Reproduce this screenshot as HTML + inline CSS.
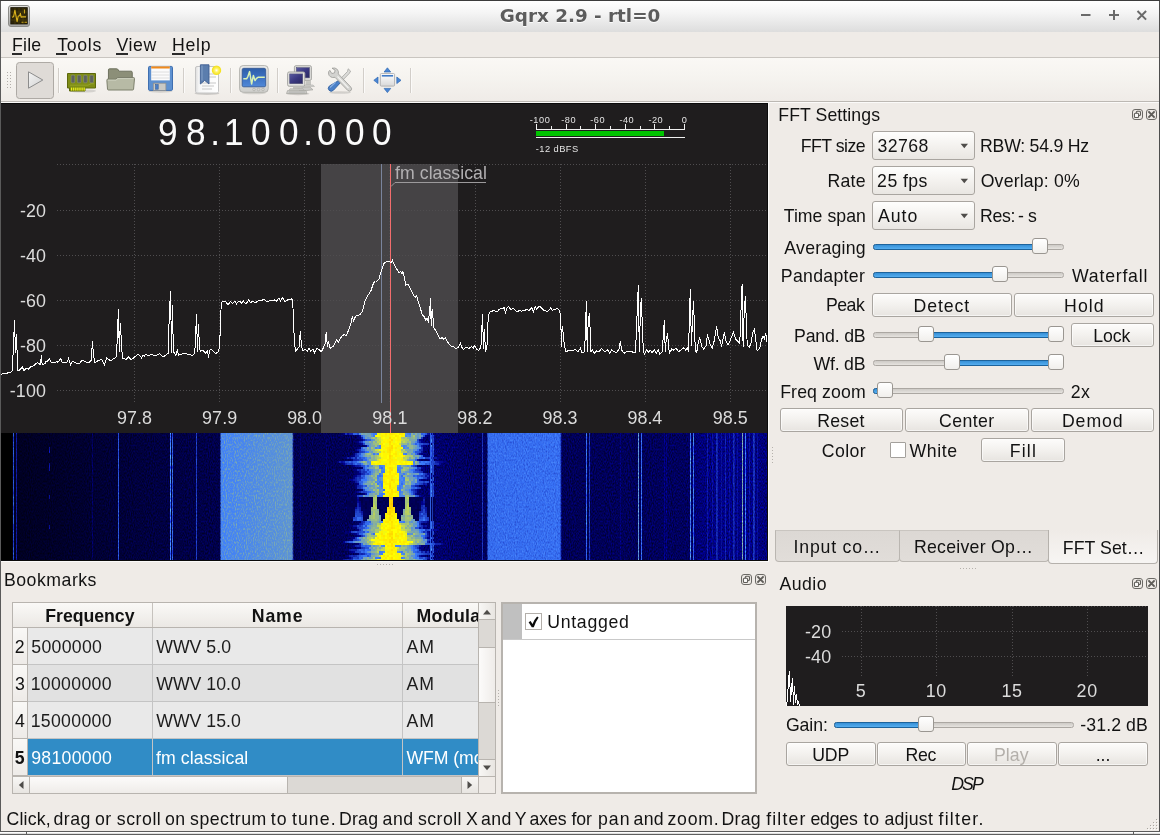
<!DOCTYPE html>
<html><head><meta charset="utf-8"><title>Gqrx 2.9 - rtl=0</title>
<style>
html,body{margin:0;padding:0;}
body{width:1160px;height:835px;position:relative;overflow:hidden;background:#efebe7;font-family:"Liberation Sans",sans-serif;}
div,span.t,svg{position:absolute;box-sizing:border-box;}
span.t{white-space:pre;line-height:20px;height:20px;}
#all{left:0;top:0;width:1160px;height:835px;will-change:transform;}
.btn{border:1px solid #a9a5a0;border-radius:3px;background:linear-gradient(#fdfcfb,#f3f1ee 50%,#e7e4e0);box-shadow:inset 0 0 0 1px rgba(255,255,255,.6);}
.cmb{border:1px solid #a9a5a0;border-radius:3px;background:linear-gradient(#fefefd,#f4f2ef 50%,#e9e6e2);}
.grv{border:1px solid #aba7a2;border-radius:2.5px;background:linear-gradient(#cdcac6,#e6e3df);}
.fil{border:1px solid #1d639c;border-radius:2.5px;background:linear-gradient(#3790d6,#55aef0);}
.thm{border:1px solid #9a9691;border-radius:3px;background:linear-gradient(#ffffff,#f1efec);}
.sep{width:1px;background:#d2cec9;border-right:1px solid #fbfaf9;box-sizing:content-box;}
</style></head><body><div id="all">

<div style="left:0px;top:0px;width:1160px;height:32px;background:linear-gradient(#ffffff,#f4f4f4 40%,#dddddd);border-top:1px solid #4a4a4a;"></div>
<div style="left:0px;top:32px;width:1160px;height:25px;background:#efebe7;"></div>
<div style="left:0px;top:57px;width:1160px;height:1px;background:#c9c5c0;"></div>
<div style="left:0px;top:58px;width:1160px;height:44px;background:linear-gradient(#faf8f5,#f6f4f0 40%,#efebe7);"></div>
<div style="left:0px;top:101px;width:1160px;height:1px;background:#bcb8b3;"></div>
<div style="left:0px;top:102px;width:1160px;height:1px;background:#fbfaf9;"></div>
<span class="t" style="left:380px;width:400px;text-align:center;top:6px;font-family:'DejaVu Sans',sans-serif;font-weight:bold;font-size:18.35px;color:#5c5c5c;text-shadow:0 1px 0 rgba(255,255,255,.8);">Gqrx 2.9 - rtl=0</span>
<svg style="left:1075px;top:4px" width="80" height="24" viewBox="0 0 80 24"><g stroke="#6a6a6a" stroke-width="2" fill="none"><path d="M6 11h9.500"/><path d="M34 11h10M39 6v10"/><path d="M62.500 7l8.600 8.600M71.100 7l-8.600 8.600"/></g></svg>
<svg style="left:7px;top:4px" width="24" height="24" viewBox="0 0 24 24"><defs><linearGradient id="ai" x1="0" y1="0" x2="0" y2="1"><stop offset="0" stop-color="#e2e2e0"/><stop offset="1" stop-color="#a4a4a2"/></linearGradient></defs><rect x="1.500" y="1.500" width="21" height="21" rx="2.500" fill="url(#ai)" stroke="#8b8b88"/><rect x="3.800" y="3.600" width="16.500" height="16.400" fill="#2c2408" stroke="#1a1404" stroke-width=".8"/><path d="M4 8h16M4 12h16M4 16h16M8 4v16M12 4v16M16 4v16" stroke="#55460f" stroke-width=".6"/><path d="M5 13.300l1.600-.6 1.300-6.500 2.200 11.500 1.100-5.500 1.500-.6.700-2.300.8 4 1.300-.4h3.500" stroke="#dcb41c" stroke-width="1.100" fill="none" stroke-linejoin="round"/><path d="M17.500 5.500v4M14.500 18.300h2M17.500 18.300h2.500" stroke="#c9a41a" stroke-width="1.100"/></svg>
<span class="t" style="left:12.08px;top:35px;font-size:17.7px;color:#121212;letter-spacing:0.209px;">File</span>
<div style="left:12px;top:53px;width:10px;height:2px;background:#2a2a2a"></div>
<span class="t" style="left:57.15px;top:35px;font-size:17.7px;color:#121212;letter-spacing:0.711px;">Tools</span>
<div style="left:56px;top:53px;width:11px;height:2px;background:#2a2a2a"></div>
<span class="t" style="left:116.60px;top:35px;font-size:17.7px;color:#121212;letter-spacing:0.548px;">View</span>
<div style="left:116px;top:53px;width:12px;height:2px;background:#2a2a2a"></div>
<span class="t" style="left:172.08px;top:35px;font-size:17.7px;color:#121212;letter-spacing:0.683px;">Help</span>
<div style="left:172px;top:53px;width:13px;height:2px;background:#2a2a2a"></div>
<svg style="left:6px;top:70px" width="6" height="20" viewBox="0 0 6 20" shape-rendering="crispEdges"><g fill="#b3afaa"><rect x="1" y="2" width="1" height="1"/><rect x="4" y="2" width="1" height="1"/><rect x="1" y="5" width="1" height="1"/><rect x="4" y="5" width="1" height="1"/><rect x="1" y="8" width="1" height="1"/><rect x="4" y="8" width="1" height="1"/><rect x="1" y="11" width="1" height="1"/><rect x="4" y="11" width="1" height="1"/><rect x="1" y="14" width="1" height="1"/><rect x="4" y="14" width="1" height="1"/><rect x="1" y="17" width="1" height="1"/><rect x="4" y="17" width="1" height="1"/></g></svg>
<div style="left:16px;top:62px;width:38px;height:37px;border:1px solid #aeaaa5;border-radius:3.5px;background:#dfdbd7;"></div>
<svg style="left:26px;top:69px" width="20" height="22" viewBox="0 0 20 22"><defs><linearGradient id="pg" x1="0" y1="0" x2="1" y2="1"><stop offset="0" stop-color="#f4f4f4"/><stop offset="1" stop-color="#d2d2d2"/></linearGradient></defs><path d="M2.5 2.8L16.8 11 2.5 19.2z" fill="url(#pg)" stroke="#8c8c8c" stroke-width="1"/></svg>
<div class="sep" style="left:58px;top:68px;width:1px;height:25px;"></div>
<div class="sep" style="left:183px;top:68px;width:1px;height:25px;"></div>
<div class="sep" style="left:230px;top:68px;width:1px;height:25px;"></div>
<div class="sep" style="left:277px;top:68px;width:1px;height:25px;"></div>
<div class="sep" style="left:363px;top:68px;width:1px;height:25px;"></div>
<div class="sep" style="left:410px;top:68px;width:1px;height:25px;"></div>
<svg style="left:66px;top:70px" width="32" height="24" viewBox="0 0 32 24">
<ellipse cx="17" cy="21" rx="13" ry="1.6" fill="#000" opacity=".12"/>
<path d="M1.5 3.5h28v14.5h-10.5v3h-15.5v-3h-2z" fill="#7f8d16" stroke="#5d680c"/>
<g fill="#5d625c" stroke="#8a8f88" stroke-width=".6"><rect x="5.2" y="5.2" width="3.6" height="7.6" rx="1"/><rect x="11.4" y="5.2" width="3.6" height="7.6" rx="1"/><rect x="17.6" y="5.2" width="3.6" height="7.6" rx="1"/><rect x="23.8" y="5.2" width="3.6" height="7.6" rx="1"/></g>
<path d="M4 15.2h18l3-1.5h3" stroke="#a3b030" stroke-width=".6" fill="none"/>
<g fill="#eef21e"><rect x="5" y="17.6" width="1.2" height="3"/><rect x="7.1" y="17.6" width="1.2" height="3"/><rect x="9.2" y="17.6" width="1.2" height="3"/><rect x="11.3" y="17.6" width="1.2" height="3"/><rect x="13.4" y="17.6" width="1.2" height="3"/><rect x="15.5" y="17.6" width="1.2" height="3"/><rect x="17.6" y="17.6" width="1.2" height="3"/></g></svg>
<svg style="left:106px;top:65px" width="30" height="28" viewBox="0 0 32 28" preserveAspectRatio="none">
<path d="M2.600 23V5q0-1.200 1.200-1.200h7.600q1 0 1.600 1l.8 1.400h13q1.200 0 1.200 1.200V23z" fill="#8c8f78" stroke="#6c6f5c"/>
<path d="M2.6 25q-.9 0-1-1L.9 15.3q-.1-1.2 1.1-1.2h8.600l1.500-1.600h17.200q1.200 0 1.100 1.200L29.400 24q-.1 1-1 1z" fill="#b7baa5" stroke="#7b7e6a"/>
<path d="M2 15.2h8.900l1.500-1.600h16.800" stroke="#d2d4c4" stroke-width=".8" fill="none"/></svg>
<svg style="left:146px;top:64px" width="30" height="30" viewBox="0 0 30 30">
<ellipse cx="14.5" cy="27.3" rx="12" ry="1.5" fill="#000" opacity=".13"/>
<path d="M2.500 3.600q0-1.200 1.200-1.200h21.600q1.200 0 1.200 1.200v21.600q0 1.200-1.200 1.200h-21.600q-1.200 0-1.200-1.200z" fill="#5e91d0" stroke="#3f6fb0"/>
<rect x="5.2" y="2.4" width="18.600" height="14" fill="#fbfbfb"/>
<rect x="5.2" y="2.400" width="18.600" height="2.100" fill="#f08a1c"/>
<path d="M5.200 8h18.600M5.200 11h18.600M5.200 14h18.600" stroke="#d8d8d8" stroke-width=".8"/>
<rect x="7.300" y="19.200" width="12.600" height="7.200" fill="#c9c9c5" stroke="#8f8f8b" stroke-width=".7"/>
<rect x="9.600" y="20.600" width="2.600" height="4.600" fill="#4a7fc6" stroke="#35609e" stroke-width=".6"/></svg>
<svg style="left:192px;top:62px" width="32" height="34" viewBox="0 0 32 34">
<defs><radialGradient id="sg"><stop offset="0" stop-color="#ffffff"/><stop offset=".35" stop-color="#fff36a"/><stop offset=".8" stop-color="#f5e220"/><stop offset="1" stop-color="#f5e220" stop-opacity="0"/></radialGradient>
<linearGradient id="dg" x1="0" x2="1"><stop offset="0" stop-color="#dcdcdc"/><stop offset=".15" stop-color="#f6f6f6"/><stop offset="1" stop-color="#ffffff"/></linearGradient></defs>
<ellipse cx="15" cy="31.500" rx="12.500" ry="1.400" fill="#000" opacity=".15"/>
<rect x="3.5" y="4.500" width="23" height="26.500" rx="1.500" fill="url(#dg)" stroke="#c4c4c4"/>
<path d="M16 12h8M16 15h8M10 21h14M10 24h12M10 27h10" stroke="#d9d9d9" stroke-width="1.6"/>
<path d="M8.400 2.800h8.600v19.200l-4.300-3.600-4.300 3.600z" fill="#5b7dad" stroke="#3f5f92" stroke-width=".9"/>
<path d="M10 3.500v15" stroke="#86a2c8" stroke-width="1"/>
<circle cx="24.500" cy="8.300" r="5.200" fill="url(#sg)"/></svg>
<svg style="left:238px;top:63px" width="33" height="32" viewBox="0 0 33 32">
<defs><linearGradient id="ms" x1="0" y1="0" x2="0" y2="1"><stop offset="0" stop-color="#2f5fa8"/><stop offset=".45" stop-color="#3a6fc0"/><stop offset="1" stop-color="#5189d8"/></linearGradient>
<linearGradient id="mf" x1="0" y1="0" x2="0" y2="1"><stop offset="0" stop-color="#ececea"/><stop offset="1" stop-color="#cfcfcc"/></linearGradient></defs>
<ellipse cx="16" cy="30" rx="12" ry="1.300" fill="#000" opacity=".12"/>
<rect x="1.600" y="2.600" width="28.600" height="26.700" rx="3.500" fill="url(#mf)" stroke="#b4b4b0"/>
<rect x="4.200" y="5.300" width="23.500" height="18.500" rx="1.500" fill="url(#ms)" stroke="#2d5391" stroke-width=".8"/>
<path d="M5.300 15.800h3.300l1.300-2.200 1.700-5 2 12.400 1.800-8.600 1.600 5.200 1.500-2.300 1.500-1h6.800" stroke="#d9f2b4" stroke-width="1.500" fill="none" stroke-linejoin="round"/>
<g fill="#d6d6d3" stroke="#a9a9a5" stroke-width=".6"><circle cx="16" cy="26.500" r="1.300"/><circle cx="20.500" cy="26.500" r="1.300"/><circle cx="25" cy="26.500" r="1.300"/></g></svg>
<svg style="left:284px;top:62.8px" width="34" height="33.200" viewBox="0 0 34 34" preserveAspectRatio="none">
<defs><linearGradient id="cs" x1="0" y1="0" x2="1" y2="1"><stop offset="0" stop-color="#5a5aa0"/><stop offset=".5" stop-color="#3a3880"/><stop offset="1" stop-color="#2a2860"/></linearGradient></defs>
<ellipse cx="14" cy="31.500" rx="11.500" ry="1.500" fill="#000" opacity=".15"/>
<path d="M14 25.500l12-1 3 3-13 1.500z" fill="#c9c9c6" stroke="#9c9c98" stroke-width=".6"/>
<rect x="10.400" y="2.800" width="17" height="15" rx="1.500" fill="#dededb" stroke="#a6a6a2"/>
<rect x="12.400" y="4.800" width="13" height="10.400" fill="url(#cs)" stroke="#55557a" stroke-width=".6"/>
<path d="M22 18.500h5v4h-5z" fill="#c4c4c0"/><path d="M20 22.500h9l1.500 1.500h-11z" fill="#d4d4d0" stroke="#a4a4a0" stroke-width=".5"/>
<rect x="3.600" y="9.200" width="17.200" height="14.600" rx="1.500" fill="#e2e2df" stroke="#a6a6a2"/>
<rect x="5.700" y="11.200" width="13" height="10" fill="url(#cs)" stroke="#55557a" stroke-width=".6"/>
<path d="M9 24h7v2.500h-7z" fill="#c0c0bc"/><path d="M6 26.300h13l1 1.400h-15z" fill="#d2d2ce" stroke="#a4a4a0" stroke-width=".5"/>
<path d="M3.500 28.300h18.500l1 3h-20.500z" fill="#cfcfcc" stroke="#9a9a96" stroke-width=".6"/>
<path d="M5 29.500h16M4.600 30.500h17" stroke="#a9a9a5" stroke-width=".5"/></svg>
<svg style="left:325px;top:65px" width="30" height="30" viewBox="0 0 30 30">
<ellipse cx="15" cy="27.500" rx="11" ry="1.300" fill="#000" opacity=".13"/>
<path d="M23.200 3.800l2.400 2.300-1.300 2.300-9 9.200-1.800-1.800 9-9.300z" fill="#dcdcd9" stroke="#a5a5a1" stroke-width=".8"/>
<path d="M13.400 15.700l2 2-6.800 7.400q-2.300 2.300-4.400.3t.2-4.400z" fill="#4a80c8" stroke="#2f5f9f" stroke-width=".9"/>
<path d="M5 22.500l5.500-5.300" stroke="#8ab0e0" stroke-width="1.200"/>
<path d="M3.600 6.600q-.6-2.600 1.200-3.800l2 3.200 2.700-.6.600-2.700-3.100-2q3.200-1 5.300 1.200 1.700 2 1 4.500l12.500 13.200q1.600 1.800.2 3.400-1.600 1.500-3.400-.2L10 9.800q-2.500.8-4.600-.6-1.400-1-1.800-2.600z" transform="translate(0,2.500)" fill="#d3d3d0" stroke="#9b9b97" stroke-width=".8"/>
<path d="M12.500 11.500l11 11.500" stroke="#f2f2f0" stroke-width="1.100"/></svg>
<svg style="left:372px;top:65px" width="31" height="30" viewBox="0 0 31 30">
<defs><linearGradient id="vw" x1="0" y1="0" x2="0" y2="1"><stop offset="0" stop-color="#ffffff"/><stop offset="1" stop-color="#d9d9d9"/></linearGradient></defs>
<rect x="8.300" y="8.600" width="14.300" height="12.500" rx="1" fill="url(#vw)" stroke="#b3b3b3"/>
<rect x="9.800" y="10" width="11.300" height="1.600" fill="#3f7ac6"/>
<g fill="#4a86d4" stroke="#2f68b2" stroke-width=".7"><path d="M15.400 2.800l3.300 4.200h-6.600z"/><path d="M15.400 27.600l3.300-4.200h-6.600z"/><path d="M1.800 15.300l4.200-3.300v6.600z"/><path d="M29 15.300l-4.200-3.300v6.600z"/></g></svg>
<div style="left:0px;top:103px;width:1px;height:458px;background:#8d8d8d;"></div>
<div style="left:1px;top:103px;width:767px;height:458px;background:#0b0b0b;"></div>
<div style="left:1px;top:104px;width:766px;height:329px;background:#1f1d1e;"></div>
<div style="left:768px;top:103px;width:1px;height:459px;background:#fbfaf9;"></div>
<div style="left:0px;top:561px;width:769px;height:1px;background:#fbfaf9;"></div>
<div style="left:154.3px;top:112px;width:260px;height:42px;line-height:42px;font-size:36.5px;color:#fbfbfb;white-space:nowrap;"><span style="display:inline-block;width:27.76px;text-align:center;transform:scaleX(.965);">9</span><span style="display:inline-block;width:27.76px;text-align:center;transform:scaleX(.965);">8</span><span style="display:inline-block;width:9.90px;text-align:center;transform:scaleX(.965);">.</span><span style="display:inline-block;width:27.76px;text-align:center;transform:scaleX(.965);">1</span><span style="display:inline-block;width:27.76px;text-align:center;transform:scaleX(.965);">0</span><span style="display:inline-block;width:27.76px;text-align:center;transform:scaleX(.965);">0</span><span style="display:inline-block;width:9.90px;text-align:center;transform:scaleX(.965);">.</span><span style="display:inline-block;width:27.76px;text-align:center;transform:scaleX(.965);">0</span><span style="display:inline-block;width:27.76px;text-align:center;transform:scaleX(.965);">0</span><span style="display:inline-block;width:27.76px;text-align:center;transform:scaleX(.965);">0</span></div>
<svg style="left:520px;top:108px" width="180" height="50" viewBox="0 0 180 50" shape-rendering="crispEdges"><rect x="16" y="21" width="149" height="1" fill="#f0f0f0"/><rect x="16.0" y="16" width="1" height="5" fill="#f0f0f0"/><rect x="31.0" y="18" width="1" height="3" fill="#f0f0f0"/><rect x="46.0" y="16" width="1" height="5" fill="#f0f0f0"/><rect x="60.0" y="18" width="1" height="3" fill="#f0f0f0"/><rect x="75.0" y="16" width="1" height="5" fill="#f0f0f0"/><rect x="90.0" y="18" width="1" height="3" fill="#f0f0f0"/><rect x="105.0" y="16" width="1" height="5" fill="#f0f0f0"/><rect x="120.0" y="18" width="1" height="3" fill="#f0f0f0"/><rect x="134.0" y="16" width="1" height="5" fill="#f0f0f0"/><rect x="149.0" y="18" width="1" height="3" fill="#f0f0f0"/><rect x="164.0" y="16" width="1" height="5" fill="#f0f0f0"/><rect x="16" y="23" width="128" height="5" fill="#00c400"/><rect x="16" y="29" width="149" height="1" fill="#f0f0f0"/></svg>
<span class="t" style="left:529.78px;top:110px;font-size:9.2px;color:#e4e4e4;letter-spacing:0.530px;">-100</span>
<span class="t" style="left:561.13px;top:110px;font-size:9.2px;color:#e4e4e4;letter-spacing:0.598px;">-80</span>
<span class="t" style="left:590.13px;top:110px;font-size:9.2px;color:#e4e4e4;letter-spacing:0.598px;">-60</span>
<span class="t" style="left:619.53px;top:110px;font-size:9.2px;color:#e4e4e4;letter-spacing:0.398px;">-40</span>
<span class="t" style="left:648.53px;top:110px;font-size:9.2px;color:#e4e4e4;letter-spacing:0.398px;">-20</span>
<span class="t" style="left:681.65px;top:110px;font-size:9.2px;color:#e4e4e4;">0</span>
<span class="t" style="left:535.83px;top:139px;font-size:9.3px;color:#e4e4e4;letter-spacing:0.428px;">-12 dBFS</span>
<svg style="left:1px;top:103px" width="767" height="330" viewBox="1 103 767 330"><rect x="321" y="164" width="137" height="269" fill="#454345"/><g stroke="#4f4d4f" stroke-width="1" stroke-dasharray="1 2" shape-rendering="crispEdges"><path d="M57 164.5H768"/><path d="M57 210.5H768"/><path d="M57 255.5H768"/><path d="M57 300.5H768"/><path d="M57 345.5H768"/><path d="M57 390.5H768"/><path d="M134.5 164V403"/><path d="M219.5 164V403"/><path d="M304.5 164V403"/><path d="M389.5 164V403"/><path d="M475.5 164V403"/><path d="M560.5 164V403"/><path d="M645.5 164V403"/><path d="M730.5 164V403"/></g><rect x="381" y="164" width="1" height="239" fill="#7a849c" shape-rendering="crispEdges"/><rect x="390" y="164" width="1" height="269" fill="#f26d6d" shape-rendering="crispEdges"/><path d="M391 186.500L395 182.500H486" stroke="#9c9a9c" stroke-width="1" fill="none"/><polyline fill="none" stroke="#ffffff" stroke-width="1" shape-rendering="crispEdges" points="1.4,374.5 3.3,373.3 5.2,373.3 6.9,373.2 8.6,372.6 10.3,372.8 12.1,370.7 13.1,353.4 14.5,319.8 15.5,353.4 16.2,333.6 17.2,353.4 17.9,370.7 19.3,370.1 20.7,369.0 22.4,367.2 24.1,370.7 25.9,368.1 28.4,369.0 31.0,366.4 32.8,366.1 34.5,365.2 36.2,363.1 37.9,362.9 40.5,364.7 41.4,355.2 42.2,364.7 44.8,363.8 46.3,361.0 47.7,361.1 49.1,358.6 51.7,362.9 53.4,362.4 55.2,362.9 56.6,361.5 58.0,362.3 59.5,360.3 60.7,358.3 62.1,362.4 63.8,362.2 65.5,362.9 67.2,362.1 68.6,358.6 70.7,364.7 72.4,361.2 74.1,362.0 75.9,362.9 77.6,363.7 79.3,363.8 81.9,360.3 83.3,360.2 84.8,361.8 86.2,362.1 88.8,362.9 91.4,360.3 92.4,341.0 93.4,353.4 94.5,362.1 96.4,362.0 98.3,360.3 100.0,360.0 101.7,359.5 104.3,364.7 106.9,357.8 108.6,359.6 110.3,360.3 112.1,359.9 113.8,358.6 116.4,356.9 117.6,331.0 118.4,309.0 119.3,351.7 120.3,323.3 121.4,341.4 122.4,358.6 124.1,358.1 125.9,359.5 128.4,356.9 131.0,359.5 132.8,358.8 134.5,356.9 136.2,355.8 137.9,354.3 139.7,355.6 141.4,357.8 142.8,355.6 144.3,356.3 145.7,354.3 148.3,356.0 150.0,355.1 151.7,354.3 153.4,355.2 155.2,355.2 156.6,355.4 158.0,354.5 159.5,353.4 162.1,356.0 163.8,356.5 165.5,355.2 168.1,353.4 169.3,315.5 170.5,291.0 171.6,353.4 172.4,305.2 173.4,351.7 175.9,355.2 177.2,350.0 178.6,355.2 180.0,354.4 181.4,354.7 182.8,353.4 184.5,353.3 186.2,353.4 187.9,354.8 189.7,354.3 191.6,355.4 193.4,354.8 194.8,352.6 195.7,332.8 196.6,314.1 197.4,351.7 198.4,324.1 199.5,346.6 200.3,351.7 202.9,350.0 205.5,353.4 207.2,350.9 208.6,356.0 210.3,349.1 211.8,349.5 213.3,351.7 215.9,353.4 218.4,351.7 219.7,346.6 220.5,319.0 221.4,302.6 223.0,301.6 224.6,301.6 226.2,302.1 227.9,304.8 230.5,301.7 232.2,303.4 234.8,301.4 236.6,303.8 239.1,300.9 241.7,303.1 243.4,300.9 246.0,304.3 248.6,300.0 250.3,302.6 252.9,301.4 254.7,302.7 256.4,302.1 259.0,300.0 261.0,301.0 262.6,299.9 264.1,299.1 266.7,301.4 268.2,301.5 269.6,300.6 271.0,300.9 272.8,300.4 274.5,300.0 276.2,301.4 278.8,298.3 280.5,300.9 282.6,297.4 284.8,301.7 287.4,300.0 289.1,299.7 291.7,298.6 292.8,301.7 293.4,320.7 294.5,343.1 295.5,351.4 297.8,348.3 299.1,346.6 300.3,331.0 301.6,346.6 302.9,350.9 305.2,349.1 307.2,351.4 309.0,348.3 310.7,350.9 312.8,349.1 314.5,352.6 316.7,348.6 319.3,349.7 321.4,351.7 323.6,347.4 325.0,344.0 326.2,332.4 327.4,346.6 328.4,341.4 330.0,348.3 331.6,347.2 333.1,346.6 336.6,339.7 338.3,342.2 341.7,336.2 344.3,334.5 346.0,336.2 348.6,330.2 351.2,322.4 352.4,316.4 353.4,320.7 355.5,316.4 357.0,315.5 358.4,315.4 359.8,314.7 362.4,311.2 365.0,300.9 367.6,295.7 369.3,293.3 371.0,290.5 373.6,282.8 375.3,281.0 377.1,281.1 378.8,279.3 381.4,270.7 384.0,263.4 386.6,261.4 386.9,261.2 389.5,261.4 391.2,262.9 392.4,260.3 394.7,265.5 397.2,269.8 399.0,272.4 400.7,271.6 402.1,274.1 402.9,271.6 404.1,275.9 405.9,285.3 407.6,284.1 409.3,286.2 411.0,289.7 413.6,295.7 415.3,297.4 416.6,295.7 418.3,301.7 420.5,308.6 422.2,314.7 424.0,316.4 425.7,319.8 426.9,318.1 428.3,321.6 429.7,311.2 430.5,298.3 431.2,325.9 432.1,309.5 433.1,319.0 433.8,327.6 436.0,331.0 438.6,336.2 440.0,338.8 442.1,337.6 443.8,339.3 445.2,337.6 447.2,341.4 449.8,344.8 451.6,346.6 454.1,346.9 455.9,348.6 458.4,347.4 460.5,343.4 461.9,347.4 463.6,349.7 466.2,346.9 468.8,348.6 471.4,346.6 473.1,348.3 474.5,345.7 476.6,349.1 478.6,350.3 480.9,347.4 481.7,331.0 482.6,314.1 483.4,349.1 484.3,329.3 485.5,350.9 486.9,348.3 487.6,331.0 488.3,315.5 490.3,311.2 492.1,311.2 493.8,310.3 495.9,311.7 497.4,311.5 499.0,309.5 501.6,308.6 504.1,307.8 505.5,312.1 506.7,308.6 508.4,306.6 511.0,309.5 513.6,308.6 516.2,311.2 517.9,311.4 519.7,310.0 521.4,311.3 523.1,310.3 524.8,310.3 526.6,309.5 529.1,310.3 531.7,307.8 533.4,312.1 535.2,306.9 536.9,309.5 538.6,306.6 540.3,306.8 542.1,308.6 543.8,310.4 545.5,310.7 547.2,311.4 549.0,310.0 550.7,307.8 552.4,310.3 555.0,309.5 557.6,308.6 559.3,310.3 560.7,315.5 561.4,346.6 562.2,325.9 563.1,332.8 564.5,346.6 565.9,351.4 567.9,350.9 570.0,350.0 572.6,350.9 575.2,349.1 577.8,351.7 580.3,348.3 582.1,353.1 584.7,351.7 585.5,325.9 586.4,301.0 587.2,351.7 588.1,324.1 589.3,313.1 590.3,332.8 591.0,351.7 592.4,350.0 594.1,353.4 596.7,350.9 599.3,351.7 601.4,348.3 603.6,350.9 605.3,351.7 607.6,349.7 609.7,353.4 611.4,350.0 614.0,351.7 616.6,352.6 619.1,349.1 620.3,341.0 621.7,350.0 624.3,353.4 626.9,350.9 629.5,351.7 632.1,351.7 633.8,353.0 635.5,352.6 636.9,319.0 638.3,285.0 639.3,351.7 640.2,319.0 641.2,298.3 642.4,325.9 643.3,351.7 644.5,354.3 646.7,350.0 648.4,352.1 650.2,350.0 651.9,352.6 654.5,350.0 656.2,353.1 658.3,349.7 659.7,354.3 662.2,351.7 663.3,336.2 664.3,320.3 665.3,351.7 666.2,339.7 667.6,333.1 668.6,346.6 669.5,353.4 671.7,349.1 673.4,350.0 676.0,348.3 678.6,351.7 681.2,349.7 683.8,347.9 685.9,350.3 687.2,347.4 688.6,351.7 689.3,319.0 690.3,289.3 691.4,345.7 692.4,324.1 693.4,301.0 694.5,325.9 695.3,351.7 696.7,352.6 698.4,341.4 699.7,338.3 701.9,346.6 703.6,349.1 706.2,345.7 707.4,334.5 708.8,339.7 710.0,344.0 712.2,348.3 714.5,339.7 716.6,326.2 718.3,337.9 720.0,340.5 721.7,345.7 724.3,332.4 726.0,341.4 727.8,344.8 729.5,342.2 731.2,337.9 733.4,332.4 735.5,338.8 737.6,341.4 739.8,343.1 741.0,310.3 742.1,284.1 743.1,346.6 744.1,315.5 745.3,296.2 746.4,322.4 747.2,344.8 749.3,347.4 751.0,343.1 752.8,332.8 754.5,329.3 755.9,341.4 757.1,350.9 759.7,348.3 761.4,339.7 763.1,336.2 764.5,338.8 765.7,332.8 766.9,342.2"/></svg>
<span class="t" style="left:395.12px;top:163px;font-size:17.7px;color:#b2b0b2;letter-spacing:0.029px;">fm classical</span>
<span class="t" style="left:19.88px;top:201px;font-size:17.9px;color:#dcdcdc;letter-spacing:0.139px;">-20</span>
<span class="t" style="left:19.88px;top:246px;font-size:17.9px;color:#dcdcdc;letter-spacing:0.139px;">-40</span>
<span class="t" style="left:19.88px;top:291px;font-size:17.9px;color:#dcdcdc;letter-spacing:0.139px;">-60</span>
<span class="t" style="left:19.88px;top:336px;font-size:17.9px;color:#dcdcdc;letter-spacing:0.139px;">-80</span>
<span class="t" style="left:9.68px;top:381px;font-size:17.9px;color:#dcdcdc;letter-spacing:0.181px;">-100</span>
<span class="t" style="left:116.94px;top:408px;font-size:17.9px;color:#dcdcdc;letter-spacing:0.069px;">97.8</span>
<span class="t" style="left:202.04px;top:408px;font-size:17.9px;color:#dcdcdc;letter-spacing:0.099px;">97.9</span>
<span class="t" style="left:287.14px;top:408px;font-size:17.9px;color:#dcdcdc;letter-spacing:0.039px;">98.0</span>
<span class="t" style="left:372.24px;top:408px;font-size:17.9px;color:#dcdcdc;letter-spacing:0.099px;">98.1</span>
<span class="t" style="left:457.34px;top:408px;font-size:17.9px;color:#dcdcdc;letter-spacing:0.099px;">98.2</span>
<span class="t" style="left:542.44px;top:408px;font-size:17.9px;color:#dcdcdc;letter-spacing:0.069px;">98.3</span>
<span class="t" style="left:627.54px;top:408px;font-size:17.9px;color:#dcdcdc;letter-spacing:-0.021px;">98.4</span>
<span class="t" style="left:712.64px;top:408px;font-size:17.9px;color:#dcdcdc;letter-spacing:0.069px;">98.5</span>
<svg width="766" height="127" viewBox="0 0 766 127" style="left:1px;top:433px;isolation:isolate" shape-rendering="crispEdges"><defs><filter id="nz" x="0" y="0" width="100%" height="100%" color-interpolation-filters="sRGB"><feTurbulence type="fractalNoise" baseFrequency="0.95 0.5" numOctaves="1" seed="5"/><feColorMatrix type="matrix" values="0.9 0 0 0 0.04  0.9 0 0 0 0.04  0.9 0 0 0 0.04  0 0 0 0 1"/></filter><filter id="nc" x="0" y="0" width="100%" height="100%" color-interpolation-filters="sRGB"><feTurbulence type="fractalNoise" baseFrequency="0.9 0.45" numOctaves="1" seed="21"/><feColorMatrix type="matrix" values="0 0 0 0 0.14  0 0 0 0 0.28  0 0 0 0 0.8  2.4 0 0 0 -1.05"/></filter><filter id="nd" x="0" y="0" width="100%" height="100%" color-interpolation-filters="sRGB"><feTurbulence type="fractalNoise" baseFrequency="0.9 0.45" numOctaves="1" seed="33"/><feColorMatrix type="matrix" values="0 0 0 0 0.3  0 0 0 0 0.55  0 0 0 0 1  2.4 0 0 0 -1.1"/></filter><filter id="nb" x="0" y="0" width="100%" height="100%" color-interpolation-filters="sRGB"><feTurbulence type="fractalNoise" baseFrequency="0.9 0.45" numOctaves="1" seed="9"/><feColorMatrix type="matrix" values="0 0 0 0 0.56  0 0 0 0 0.72  0 0 0 0 0.6  2.2 0 0 0 -1.0"/></filter><linearGradient id="wb"><stop offset="0.00000" stop-color="#000000"/><stop offset="0.01436" stop-color="#000000"/><stop offset="0.01567" stop-color="#000022"/><stop offset="0.07702" stop-color="#00002a"/><stop offset="0.12924" stop-color="#000035"/><stop offset="0.19452" stop-color="#000040"/><stop offset="0.25979" stop-color="#000049"/><stop offset="0.28590" stop-color="#00004c"/><stop offset="0.28721" stop-color="#4080fa"/><stop offset="0.37990" stop-color="#5b92d6"/><stop offset="0.38120" stop-color="#142ab2"/><stop offset="0.38251" stop-color="#000051"/><stop offset="0.44256" stop-color="#000057"/><stop offset="0.56397" stop-color="#000070"/><stop offset="0.63446" stop-color="#00005c"/><stop offset="0.63577" stop-color="#346cf0"/><stop offset="0.72977" stop-color="#3670f4"/><stop offset="0.73107" stop-color="#0a159f"/><stop offset="0.73238" stop-color="#000057"/><stop offset="0.83420" stop-color="#00005a"/><stop offset="0.89687" stop-color="#00005f"/><stop offset="0.90731" stop-color="#000076"/><stop offset="0.93864" stop-color="#000086"/><stop offset="0.97781" stop-color="#000086"/><stop offset="1.00000" stop-color="#00007b"/></linearGradient></defs><rect x="0" y="0" width="766" height="127" fill="url(#wb)"/><rect x="12" y="0" width="1" height="127" fill="#244bd1"/><rect x="15" y="0" width="1" height="127" fill="#0c19a3"/><rect x="91" y="0" width="1" height="127" fill="#000062"/><rect x="117" y="0" width="1" height="127" fill="#2853d9"/><rect x="169" y="0" width="1" height="127" fill="#4080fa"/><rect x="171" y="0" width="1" height="127" fill="#2c5ce0"/><rect x="195" y="0" width="1" height="127" fill="#1e3ec6"/><rect x="299" y="0" width="1" height="127" fill="#000070"/><rect x="325" y="0" width="1" height="127" fill="#000070"/><rect x="430" y="0" width="1" height="127" fill="#346cf0"/><rect x="432" y="0" width="1" height="127" fill="#244bd1"/><rect x="481" y="0" width="1" height="127" fill="#1832ba"/><rect x="585" y="0" width="1" height="127" fill="#346cf0"/><rect x="588" y="0" width="1" height="127" fill="#1c3ac2"/><rect x="619" y="0" width="1" height="127" fill="#00007b"/><rect x="637" y="0" width="1" height="127" fill="#5b92d6"/><rect x="640" y="0" width="1" height="127" fill="#346cf0"/><rect x="663" y="0" width="1" height="127" fill="#00008c"/><rect x="665" y="0" width="1" height="127" fill="#000081"/><rect x="689" y="0" width="1" height="127" fill="#4c87eb"/><rect x="692" y="0" width="1" height="127" fill="#346cf0"/><rect x="741" y="0" width="1" height="127" fill="#7aa7ad"/><rect x="744" y="0" width="1" height="127" fill="#3875f7"/><rect x="706" y="0" width="1" height="127" fill="#0c19a3"/><rect x="711" y="0" width="1" height="127" fill="#08119b"/><rect x="715" y="0" width="1" height="127" fill="#142ab2"/><rect x="716" y="0" width="1" height="127" fill="#1021ab"/><rect x="720" y="0" width="1" height="127" fill="#08119b"/><rect x="724" y="0" width="1" height="127" fill="#1021ab"/><rect x="728" y="0" width="1" height="127" fill="#08119b"/><rect x="732" y="0" width="1" height="127" fill="#142ab2"/><rect x="733" y="0" width="1" height="127" fill="#0c19a3"/><rect x="736" y="0" width="1" height="127" fill="#08119b"/><rect x="748" y="0" width="1" height="127" fill="#0c19a3"/><rect x="752" y="0" width="1" height="127" fill="#1832ba"/><rect x="753" y="0" width="1" height="127" fill="#142ab2"/><rect x="756" y="0" width="1" height="127" fill="#08119b"/><rect x="48" y="14" width="1" height="6" fill="#0a12a0"/><rect x="48" y="30" width="1" height="8" fill="#0a12a0"/><rect x="48" y="62" width="1" height="4" fill="#0a12a0"/><rect x="48" y="92" width="1" height="4" fill="#0a12a0"/><rect x="220" y="0" width="72" height="127" filter="url(#nb)"/><rect x="487" y="0" width="73" height="127" filter="url(#nc)"/><rect x="487" y="0" width="73" height="127" filter="url(#nd)"/><rect x="0" y="0" width="220" height="127" filter="url(#nz)" style="mix-blend-mode:overlay"/><rect x="292" y="0" width="195" height="127" filter="url(#nz)" style="mix-blend-mode:overlay"/><rect x="560" y="0" width="206" height="127" filter="url(#nz)" style="mix-blend-mode:overlay"/><path fill="#000046" d="M351.5 16h2v2h-2zM399.5 64h2v2h-2zM359.5 66h2v2h-2zM381.5 66h2v2h-2zM399.5 66h2v2h-2zM359.5 68h2v2h-2zM377.5 68h2v2h-2zM429.5 68h2v2h-2zM363.5 70h2v2h-2zM395.5 70h2v2h-2zM363.5 74h2v2h-2zM377.5 76h2v2h-2zM415.5 76h2v2h-2zM363.5 84h2v2h-2zM349.5 86h2v2h-2z"/><path fill="#00004e" d="M349.5 20h2v2h-2zM349.5 64h2v2h-2zM357.5 64h2v2h-2zM359.5 64h2v2h-2zM365.5 64h2v2h-2zM367.5 64h2v2h-2zM369.5 64h2v2h-2zM375.5 64h2v2h-2zM377.5 64h2v2h-2zM379.5 64h2v2h-2zM381.5 64h2v2h-2zM385.5 64h2v2h-2zM393.5 64h2v2h-2zM401.5 64h2v2h-2zM407.5 64h2v2h-2zM411.5 64h2v2h-2zM415.5 64h2v2h-2zM417.5 64h2v2h-2zM427.5 64h2v2h-2zM349.5 66h2v2h-2zM351.5 66h2v2h-2zM357.5 66h2v2h-2zM367.5 66h2v2h-2zM375.5 66h2v2h-2zM385.5 66h2v2h-2zM395.5 66h2v2h-2zM397.5 66h2v2h-2zM407.5 66h2v2h-2zM413.5 66h2v2h-2zM415.5 66h2v2h-2zM423.5 66h2v2h-2zM431.5 66h2v2h-2zM345.5 68h2v2h-2zM347.5 68h2v2h-2zM351.5 68h2v2h-2zM363.5 68h2v2h-2zM367.5 68h2v2h-2zM369.5 68h2v2h-2zM375.5 68h2v2h-2zM379.5 68h2v2h-2zM383.5 68h2v2h-2zM385.5 68h2v2h-2zM393.5 68h2v2h-2zM399.5 68h2v2h-2zM413.5 68h2v2h-2zM427.5 68h2v2h-2zM431.5 68h2v2h-2zM345.5 70h2v2h-2zM347.5 70h2v2h-2zM349.5 70h2v2h-2zM353.5 70h2v2h-2zM359.5 70h2v2h-2zM383.5 70h2v2h-2zM391.5 70h2v2h-2zM399.5 70h2v2h-2zM401.5 70h2v2h-2zM409.5 70h2v2h-2zM413.5 70h2v2h-2zM415.5 70h2v2h-2zM423.5 70h2v2h-2zM427.5 70h2v2h-2zM347.5 72h2v2h-2zM349.5 72h2v2h-2zM351.5 72h2v2h-2zM353.5 72h2v2h-2zM361.5 72h2v2h-2zM363.5 72h2v2h-2zM369.5 72h2v2h-2zM377.5 72h2v2h-2zM381.5 72h2v2h-2zM385.5 72h2v2h-2zM391.5 72h2v2h-2zM393.5 72h2v2h-2zM399.5 72h2v2h-2zM401.5 72h2v2h-2zM407.5 72h2v2h-2zM411.5 72h2v2h-2zM415.5 72h2v2h-2zM429.5 72h2v2h-2zM351.5 74h2v2h-2zM375.5 74h2v2h-2zM383.5 74h2v2h-2zM393.5 74h2v2h-2zM399.5 74h2v2h-2zM415.5 74h2v2h-2zM431.5 74h2v2h-2zM345.5 76h2v2h-2zM349.5 76h2v2h-2zM379.5 76h2v2h-2zM397.5 76h2v2h-2zM409.5 76h2v2h-2zM413.5 76h2v2h-2zM417.5 76h2v2h-2zM429.5 76h2v2h-2zM431.5 76h2v2h-2zM349.5 78h2v2h-2zM351.5 78h2v2h-2zM367.5 78h2v2h-2zM377.5 78h2v2h-2zM381.5 78h2v2h-2zM393.5 78h2v2h-2zM397.5 78h2v2h-2zM411.5 78h2v2h-2zM429.5 78h2v2h-2zM347.5 80h2v2h-2zM349.5 80h2v2h-2zM351.5 80h2v2h-2zM377.5 80h2v2h-2zM395.5 80h2v2h-2zM399.5 80h2v2h-2zM411.5 80h2v2h-2zM425.5 80h2v2h-2zM429.5 80h2v2h-2zM345.5 82h2v2h-2zM347.5 82h2v2h-2zM349.5 82h2v2h-2zM351.5 82h2v2h-2zM365.5 82h2v2h-2zM397.5 82h2v2h-2zM411.5 82h2v2h-2zM415.5 82h2v2h-2zM431.5 82h2v2h-2zM347.5 84h2v2h-2zM361.5 84h2v2h-2zM365.5 84h2v2h-2zM379.5 84h2v2h-2zM381.5 84h2v2h-2zM395.5 84h2v2h-2zM397.5 84h2v2h-2zM427.5 84h2v2h-2zM431.5 84h2v2h-2zM345.5 86h2v2h-2zM361.5 86h2v2h-2zM363.5 86h2v2h-2zM379.5 86h2v2h-2zM413.5 86h2v2h-2zM415.5 86h2v2h-2zM429.5 86h2v2h-2zM339.5 108h2v2h-2z"/><path fill="#000057" d="M347.5 26h2v2h-2zM333.5 28h2v2h-2zM349.5 44h2v2h-2zM351.5 52h2v2h-2zM351.5 54h2v2h-2zM351.5 58h2v2h-2zM351.5 64h2v2h-2zM353.5 64h2v2h-2zM361.5 64h2v2h-2zM363.5 64h2v2h-2zM383.5 64h2v2h-2zM391.5 64h2v2h-2zM409.5 64h2v2h-2zM413.5 64h2v2h-2zM419.5 64h2v2h-2zM425.5 64h2v2h-2zM429.5 64h2v2h-2zM431.5 64h2v2h-2zM347.5 66h2v2h-2zM353.5 66h2v2h-2zM361.5 66h2v2h-2zM369.5 66h2v2h-2zM383.5 66h2v2h-2zM391.5 66h2v2h-2zM401.5 66h2v2h-2zM409.5 66h2v2h-2zM417.5 66h2v2h-2zM419.5 66h2v2h-2zM425.5 66h2v2h-2zM427.5 66h2v2h-2zM429.5 66h2v2h-2zM353.5 68h2v2h-2zM361.5 68h2v2h-2zM365.5 68h2v2h-2zM397.5 68h2v2h-2zM401.5 68h2v2h-2zM407.5 68h2v2h-2zM409.5 68h2v2h-2zM411.5 68h2v2h-2zM425.5 68h2v2h-2zM351.5 70h2v2h-2zM365.5 70h2v2h-2zM367.5 70h2v2h-2zM369.5 70h2v2h-2zM375.5 70h2v2h-2zM379.5 70h2v2h-2zM397.5 70h2v2h-2zM407.5 70h2v2h-2zM411.5 70h2v2h-2zM425.5 70h2v2h-2zM429.5 70h2v2h-2zM431.5 70h2v2h-2zM345.5 72h2v2h-2zM359.5 72h2v2h-2zM365.5 72h2v2h-2zM375.5 72h2v2h-2zM395.5 72h2v2h-2zM409.5 72h2v2h-2zM413.5 72h2v2h-2zM417.5 72h2v2h-2zM423.5 72h2v2h-2zM425.5 72h2v2h-2zM427.5 72h2v2h-2zM345.5 74h2v2h-2zM347.5 74h2v2h-2zM349.5 74h2v2h-2zM359.5 74h2v2h-2zM361.5 74h2v2h-2zM365.5 74h2v2h-2zM367.5 74h2v2h-2zM377.5 74h2v2h-2zM381.5 74h2v2h-2zM397.5 74h2v2h-2zM409.5 74h2v2h-2zM411.5 74h2v2h-2zM425.5 74h2v2h-2zM427.5 74h2v2h-2zM347.5 76h2v2h-2zM351.5 76h2v2h-2zM359.5 76h2v2h-2zM363.5 76h2v2h-2zM365.5 76h2v2h-2zM393.5 76h2v2h-2zM411.5 76h2v2h-2zM425.5 76h2v2h-2zM427.5 76h2v2h-2zM345.5 78h2v2h-2zM347.5 78h2v2h-2zM363.5 78h2v2h-2zM365.5 78h2v2h-2zM383.5 78h2v2h-2zM395.5 78h2v2h-2zM413.5 78h2v2h-2zM415.5 78h2v2h-2zM425.5 78h2v2h-2zM431.5 78h2v2h-2zM345.5 80h2v2h-2zM365.5 80h2v2h-2zM367.5 80h2v2h-2zM379.5 80h2v2h-2zM381.5 80h2v2h-2zM397.5 80h2v2h-2zM415.5 80h2v2h-2zM427.5 80h2v2h-2zM361.5 82h2v2h-2zM363.5 82h2v2h-2zM395.5 82h2v2h-2zM413.5 82h2v2h-2zM425.5 82h2v2h-2zM427.5 82h2v2h-2zM411.5 84h2v2h-2zM413.5 84h2v2h-2zM429.5 84h2v2h-2zM347.5 86h2v2h-2zM397.5 86h2v2h-2zM427.5 86h2v2h-2zM345.5 124h2v2h-2z"/><path fill="#00005f" d="M339.5 0h2v2h-2zM353.5 18h2v2h-2zM419.5 26h2v2h-2zM357.5 34h2v2h-2zM345.5 46h2v2h-2zM419.5 52h2v2h-2zM357.5 56h2v2h-2zM417.5 56h2v2h-2zM417.5 58h2v2h-2zM359.5 60h2v2h-2zM351.5 62h2v2h-2zM345.5 64h2v2h-2zM347.5 64h2v2h-2zM395.5 64h2v2h-2zM397.5 64h2v2h-2zM423.5 64h2v2h-2zM345.5 66h2v2h-2zM363.5 66h2v2h-2zM365.5 66h2v2h-2zM377.5 66h2v2h-2zM379.5 66h2v2h-2zM393.5 66h2v2h-2zM411.5 66h2v2h-2zM349.5 68h2v2h-2zM381.5 68h2v2h-2zM391.5 68h2v2h-2zM395.5 68h2v2h-2zM415.5 68h2v2h-2zM417.5 68h2v2h-2zM423.5 68h2v2h-2zM361.5 70h2v2h-2zM377.5 70h2v2h-2zM381.5 70h2v2h-2zM385.5 70h2v2h-2zM393.5 70h2v2h-2zM417.5 70h2v2h-2zM367.5 72h2v2h-2zM379.5 72h2v2h-2zM383.5 72h2v2h-2zM397.5 72h2v2h-2zM431.5 72h2v2h-2zM379.5 74h2v2h-2zM395.5 74h2v2h-2zM401.5 74h2v2h-2zM413.5 74h2v2h-2zM417.5 74h2v2h-2zM429.5 74h2v2h-2zM361.5 76h2v2h-2zM367.5 76h2v2h-2zM381.5 76h2v2h-2zM383.5 76h2v2h-2zM395.5 76h2v2h-2zM399.5 76h2v2h-2zM361.5 78h2v2h-2zM379.5 78h2v2h-2zM399.5 78h2v2h-2zM409.5 78h2v2h-2zM427.5 78h2v2h-2zM361.5 80h2v2h-2zM363.5 80h2v2h-2zM409.5 80h2v2h-2zM413.5 80h2v2h-2zM431.5 80h2v2h-2zM379.5 82h2v2h-2zM381.5 82h2v2h-2zM429.5 82h2v2h-2zM345.5 84h2v2h-2zM349.5 84h2v2h-2zM415.5 84h2v2h-2zM431.5 86h2v2h-2zM357.5 88h2v2h-2zM353.5 90h2v2h-2zM421.5 90h2v2h-2zM429.5 100h2v2h-2zM353.5 102h2v2h-2zM431.5 102h2v2h-2zM347.5 112h2v2h-2zM353.5 120h2v2h-2zM433.5 120h2v2h-2zM337.5 126h2v2h-2z"/><path fill="#000068" d="M355.5 2h2v2h-2zM355.5 10h2v2h-2zM429.5 10h2v2h-2zM361.5 12h2v2h-2zM421.5 18h2v2h-2zM425.5 22h2v2h-2zM339.5 30h2v2h-2zM349.5 32h2v2h-2zM417.5 32h2v2h-2zM353.5 38h2v2h-2zM423.5 38h2v2h-2zM353.5 40h2v2h-2zM429.5 40h2v2h-2zM429.5 44h2v2h-2zM349.5 48h2v2h-2zM353.5 50h2v2h-2zM417.5 52h2v2h-2zM355.5 88h2v2h-2zM355.5 90h2v2h-2zM427.5 92h2v2h-2zM345.5 98h2v2h-2zM431.5 106h2v2h-2zM353.5 110h2v2h-2zM349.5 112h2v2h-2zM345.5 116h2v2h-2zM421.5 116h2v2h-2zM339.5 126h2v2h-2zM427.5 126h2v2h-2z"/><path fill="#000070" d="M431.5 0h2v2h-2zM425.5 2h2v2h-2zM427.5 2h2v2h-2zM423.5 4h2v2h-2zM357.5 6h2v2h-2zM353.5 8h2v2h-2zM355.5 14h2v2h-2zM421.5 14h2v2h-2zM355.5 18h2v2h-2zM349.5 22h2v2h-2zM423.5 22h2v2h-2zM341.5 24h2v2h-2zM439.5 30h2v2h-2zM359.5 34h2v2h-2zM419.5 36h2v2h-2zM421.5 46h2v2h-2zM351.5 48h2v2h-2zM425.5 50h2v2h-2zM353.5 54h2v2h-2zM415.5 60h2v2h-2zM353.5 62h2v2h-2zM347.5 92h2v2h-2zM349.5 92h2v2h-2zM425.5 92h2v2h-2zM353.5 94h2v2h-2zM353.5 96h2v2h-2zM429.5 98h2v2h-2zM429.5 108h2v2h-2zM343.5 116h2v2h-2zM347.5 118h2v2h-2zM355.5 120h2v2h-2zM343.5 122h2v2h-2zM431.5 124h2v2h-2z"/><path fill="#000078" d="M341.5 0h2v2h-2zM355.5 4h2v2h-2zM357.5 4h2v2h-2zM421.5 4h2v2h-2zM421.5 16h2v2h-2zM423.5 16h2v2h-2zM351.5 20h2v2h-2zM419.5 20h2v2h-2zM343.5 24h2v2h-2zM349.5 26h2v2h-2zM335.5 28h2v2h-2zM351.5 36h2v2h-2zM355.5 38h2v2h-2zM421.5 38h2v2h-2zM355.5 40h2v2h-2zM351.5 42h2v2h-2zM431.5 42h2v2h-2zM353.5 52h2v2h-2zM419.5 54h2v2h-2zM421.5 54h2v2h-2zM359.5 56h2v2h-2zM353.5 58h2v2h-2zM415.5 58h2v2h-2zM361.5 60h2v2h-2zM357.5 68h2v2h-2zM419.5 90h2v2h-2zM351.5 94h2v2h-2zM421.5 94h2v2h-2zM343.5 98h2v2h-2zM427.5 98h2v2h-2zM351.5 100h2v2h-2zM427.5 100h2v2h-2zM429.5 102h2v2h-2zM349.5 104h2v2h-2zM427.5 104h2v2h-2zM347.5 106h2v2h-2zM349.5 106h2v2h-2zM355.5 110h2v2h-2zM441.5 110h2v2h-2zM419.5 112h2v2h-2zM355.5 114h2v2h-2zM419.5 116h2v2h-2zM429.5 118h2v2h-2zM431.5 120h2v2h-2zM425.5 126h2v2h-2z"/><path fill="#000081" d="M355.5 8h2v2h-2zM421.5 8h2v2h-2zM357.5 10h2v2h-2zM357.5 14h2v2h-2zM423.5 14h2v2h-2zM353.5 16h2v2h-2zM351.5 22h2v2h-2zM435.5 24h2v2h-2zM417.5 26h2v2h-2zM441.5 28h2v2h-2zM415.5 32h2v2h-2zM353.5 36h2v2h-2zM351.5 44h2v2h-2zM429.5 48h2v2h-2zM431.5 48h2v2h-2zM427.5 50h2v2h-2zM415.5 56h2v2h-2zM419.5 62h2v2h-2zM357.5 70h2v2h-2zM425.5 88h2v2h-2zM423.5 94h2v2h-2zM355.5 96h2v2h-2zM355.5 102h2v2h-2zM351.5 104h2v2h-2zM425.5 104h2v2h-2zM421.5 112h2v2h-2zM357.5 114h2v2h-2zM417.5 114h2v2h-2zM419.5 114h2v2h-2zM427.5 118h2v2h-2zM345.5 122h2v2h-2zM421.5 122h2v2h-2zM347.5 124h2v2h-2zM429.5 124h2v2h-2z"/><path fill="#000089" d="M423.5 2h2v2h-2zM359.5 6h2v2h-2zM419.5 6h2v2h-2zM419.5 8h2v2h-2zM427.5 10h2v2h-2zM363.5 12h2v2h-2zM421.5 12h2v2h-2zM421.5 22h2v2h-2zM341.5 30h2v2h-2zM351.5 32h2v2h-2zM421.5 34h2v2h-2zM421.5 36h2v2h-2zM357.5 40h2v2h-2zM353.5 42h2v2h-2zM427.5 42h2v2h-2zM427.5 44h2v2h-2zM347.5 46h2v2h-2zM349.5 46h2v2h-2zM419.5 46h2v2h-2zM427.5 48h2v2h-2zM355.5 50h2v2h-2zM355.5 66h2v2h-2zM419.5 68h2v2h-2zM419.5 70h2v2h-2zM357.5 72h2v2h-2zM435.5 96h2v2h-2zM347.5 98h2v2h-2zM353.5 100h2v2h-2zM357.5 102h2v2h-2zM427.5 102h2v2h-2zM429.5 106h2v2h-2zM341.5 108h2v2h-2zM427.5 108h2v2h-2zM351.5 112h2v2h-2zM349.5 118h2v2h-2zM419.5 122h2v2h-2z"/><path fill="#040894" d="M345.5 0h2v2h-2zM427.5 0h2v2h-2zM429.5 0h2v2h-2zM357.5 2h2v2h-2zM417.5 6h2v2h-2zM359.5 10h2v2h-2zM417.5 20h2v2h-2zM347.5 24h2v2h-2zM339.5 28h2v2h-2zM437.5 28h2v2h-2zM439.5 28h2v2h-2zM437.5 30h2v2h-2zM419.5 34h2v2h-2zM425.5 40h2v2h-2zM427.5 40h2v2h-2zM429.5 42h2v2h-2zM425.5 44h2v2h-2zM355.5 58h2v2h-2zM413.5 60h2v2h-2zM417.5 62h2v2h-2zM355.5 64h2v2h-2zM421.5 64h2v2h-2zM355.5 68h2v2h-2zM421.5 70h2v2h-2zM353.5 74h2v2h-2zM421.5 92h2v2h-2zM429.5 96h2v2h-2zM431.5 96h2v2h-2zM433.5 96h2v2h-2zM425.5 98h2v2h-2zM439.5 110h2v2h-2zM351.5 118h2v2h-2zM423.5 118h2v2h-2zM427.5 124h2v2h-2z"/><path fill="#0a159f" d="M425.5 0h2v2h-2zM419.5 12h2v2h-2zM355.5 16h2v2h-2zM419.5 18h2v2h-2zM431.5 24h2v2h-2zM433.5 24h2v2h-2zM415.5 26h2v2h-2zM341.5 28h2v2h-2zM435.5 28h2v2h-2zM353.5 32h2v2h-2zM355.5 32h2v2h-2zM357.5 38h2v2h-2zM423.5 42h2v2h-2zM351.5 46h2v2h-2zM417.5 46h2v2h-2zM353.5 48h2v2h-2zM421.5 50h2v2h-2zM415.5 52h2v2h-2zM413.5 56h2v2h-2zM363.5 60h2v2h-2zM421.5 68h2v2h-2zM423.5 74h2v2h-2zM423.5 76h2v2h-2zM359.5 78h2v2h-2zM421.5 88h2v2h-2zM423.5 88h2v2h-2zM357.5 90h2v2h-2zM351.5 92h2v2h-2zM353.5 92h2v2h-2zM423.5 92h2v2h-2zM417.5 94h2v2h-2zM425.5 100h2v2h-2zM417.5 112h2v2h-2zM347.5 116h2v2h-2zM417.5 116h2v2h-2zM417.5 122h2v2h-2zM349.5 124h2v2h-2zM425.5 124h2v2h-2zM341.5 126h2v2h-2z"/><path fill="#1021ab" d="M347.5 0h2v2h-2zM349.5 0h2v2h-2zM359.5 4h2v2h-2zM361.5 6h2v2h-2zM357.5 8h2v2h-2zM417.5 8h2v2h-2zM353.5 20h2v2h-2zM345.5 24h2v2h-2zM353.5 24h2v2h-2zM351.5 26h2v2h-2zM353.5 26h2v2h-2zM337.5 28h2v2h-2zM433.5 28h2v2h-2zM343.5 30h2v2h-2zM357.5 32h2v2h-2zM357.5 36h2v2h-2zM417.5 36h2v2h-2zM359.5 40h2v2h-2zM355.5 42h2v2h-2zM357.5 42h2v2h-2zM353.5 44h2v2h-2zM353.5 46h2v2h-2zM423.5 50h2v2h-2zM355.5 52h2v2h-2zM413.5 52h2v2h-2zM357.5 58h2v2h-2zM413.5 58h2v2h-2zM421.5 66h2v2h-2zM355.5 70h2v2h-2zM355.5 72h2v2h-2zM419.5 72h2v2h-2zM357.5 74h2v2h-2zM357.5 76h2v2h-2zM419.5 76h2v2h-2zM417.5 78h2v2h-2zM423.5 78h2v2h-2zM359.5 80h2v2h-2zM359.5 88h2v2h-2zM419.5 88h2v2h-2zM359.5 90h2v2h-2zM355.5 100h2v2h-2zM425.5 102h2v2h-2zM425.5 108h2v2h-2zM357.5 110h2v2h-2zM433.5 110h2v2h-2zM435.5 110h2v2h-2zM437.5 110h2v2h-2zM353.5 112h2v2h-2zM357.5 112h2v2h-2zM349.5 116h2v2h-2zM351.5 116h2v2h-2zM353.5 116h2v2h-2zM419.5 118h2v2h-2zM359.5 120h2v2h-2zM347.5 122h2v2h-2zM351.5 122h2v2h-2zM343.5 126h2v2h-2zM347.5 126h2v2h-2z"/><path fill="#162eb6" d="M343.5 0h2v2h-2zM425.5 10h2v2h-2zM357.5 16h2v2h-2zM417.5 16h2v2h-2zM419.5 16h2v2h-2zM357.5 18h2v2h-2zM353.5 22h2v2h-2zM349.5 24h2v2h-2zM429.5 24h2v2h-2zM355.5 26h2v2h-2zM349.5 30h2v2h-2zM433.5 30h2v2h-2zM435.5 30h2v2h-2zM413.5 32h2v2h-2zM355.5 36h2v2h-2zM361.5 38h2v2h-2zM419.5 38h2v2h-2zM361.5 40h2v2h-2zM423.5 40h2v2h-2zM425.5 42h2v2h-2zM357.5 44h2v2h-2zM355.5 48h2v2h-2zM357.5 52h2v2h-2zM355.5 54h2v2h-2zM357.5 54h2v2h-2zM411.5 56h2v2h-2zM355.5 74h2v2h-2zM419.5 74h2v2h-2zM421.5 74h2v2h-2zM353.5 76h2v2h-2zM357.5 78h2v2h-2zM419.5 78h2v2h-2zM361.5 88h2v2h-2zM417.5 90h2v2h-2zM357.5 92h2v2h-2zM419.5 92h2v2h-2zM355.5 94h2v2h-2zM419.5 94h2v2h-2zM357.5 96h2v2h-2zM421.5 98h2v2h-2zM359.5 102h2v2h-2zM423.5 104h2v2h-2zM427.5 106h2v2h-2zM343.5 108h2v2h-2zM355.5 112h2v2h-2zM359.5 114h2v2h-2zM415.5 114h2v2h-2zM425.5 118h2v2h-2zM357.5 120h2v2h-2zM361.5 120h2v2h-2zM425.5 120h2v2h-2zM427.5 120h2v2h-2zM429.5 120h2v2h-2zM349.5 122h2v2h-2zM353.5 122h2v2h-2zM345.5 126h2v2h-2zM349.5 126h2v2h-2z"/><path fill="#1c3ac2" d="M419.5 4h2v2h-2zM359.5 8h2v2h-2zM421.5 10h2v2h-2zM423.5 10h2v2h-2zM419.5 14h2v2h-2zM359.5 18h2v2h-2zM415.5 20h2v2h-2zM355.5 22h2v2h-2zM423.5 24h2v2h-2zM425.5 24h2v2h-2zM429.5 28h2v2h-2zM345.5 30h2v2h-2zM347.5 30h2v2h-2zM431.5 30h2v2h-2zM415.5 34h2v2h-2zM361.5 36h2v2h-2zM413.5 36h2v2h-2zM415.5 36h2v2h-2zM359.5 38h2v2h-2zM363.5 38h2v2h-2zM417.5 38h2v2h-2zM419.5 42h2v2h-2zM355.5 44h2v2h-2zM423.5 44h2v2h-2zM355.5 46h2v2h-2zM357.5 46h2v2h-2zM421.5 48h2v2h-2zM419.5 50h2v2h-2zM359.5 52h2v2h-2zM417.5 54h2v2h-2zM409.5 56h2v2h-2zM361.5 58h2v2h-2zM411.5 58h2v2h-2zM411.5 60h2v2h-2zM355.5 62h2v2h-2zM421.5 72h2v2h-2zM355.5 76h2v2h-2zM353.5 78h2v2h-2zM417.5 80h2v2h-2zM421.5 80h2v2h-2zM423.5 80h2v2h-2zM359.5 82h2v2h-2zM417.5 82h2v2h-2zM419.5 82h2v2h-2zM351.5 84h2v2h-2zM425.5 84h2v2h-2zM425.5 86h2v2h-2zM417.5 88h2v2h-2zM423.5 96h2v2h-2zM349.5 98h2v2h-2zM355.5 98h2v2h-2zM353.5 104h2v2h-2zM351.5 106h2v2h-2zM353.5 106h2v2h-2zM361.5 114h2v2h-2zM353.5 118h2v2h-2zM421.5 118h2v2h-2zM423.5 120h2v2h-2zM355.5 124h2v2h-2zM423.5 124h2v2h-2z"/><path fill="#2247cd" d="M355.5 0h2v2h-2zM363.5 6h2v2h-2zM415.5 6h2v2h-2zM361.5 10h2v2h-2zM361.5 18h2v2h-2zM417.5 18h2v2h-2zM355.5 20h2v2h-2zM351.5 24h2v2h-2zM357.5 24h2v2h-2zM427.5 24h2v2h-2zM357.5 26h2v2h-2zM359.5 26h2v2h-2zM343.5 28h2v2h-2zM345.5 28h2v2h-2zM349.5 28h2v2h-2zM431.5 28h2v2h-2zM427.5 30h2v2h-2zM429.5 30h2v2h-2zM359.5 32h2v2h-2zM411.5 32h2v2h-2zM417.5 34h2v2h-2zM359.5 36h2v2h-2zM365.5 36h2v2h-2zM415.5 38h2v2h-2zM365.5 40h2v2h-2zM421.5 40h2v2h-2zM421.5 42h2v2h-2zM359.5 44h2v2h-2zM421.5 44h2v2h-2zM425.5 48h2v2h-2zM417.5 50h2v2h-2zM411.5 52h2v2h-2zM359.5 54h2v2h-2zM415.5 54h2v2h-2zM361.5 56h2v2h-2zM359.5 58h2v2h-2zM363.5 58h2v2h-2zM415.5 62h2v2h-2zM421.5 76h2v2h-2zM355.5 78h2v2h-2zM421.5 78h2v2h-2zM353.5 80h2v2h-2zM355.5 80h2v2h-2zM357.5 80h2v2h-2zM355.5 82h2v2h-2zM357.5 82h2v2h-2zM423.5 82h2v2h-2zM353.5 84h2v2h-2zM417.5 84h2v2h-2zM423.5 84h2v2h-2zM353.5 86h2v2h-2zM361.5 90h2v2h-2zM355.5 92h2v2h-2zM359.5 92h2v2h-2zM417.5 92h2v2h-2zM357.5 94h2v2h-2zM359.5 94h2v2h-2zM425.5 96h2v2h-2zM351.5 98h2v2h-2zM357.5 98h2v2h-2zM361.5 98h2v2h-2zM423.5 98h2v2h-2zM423.5 102h2v2h-2zM425.5 106h2v2h-2zM345.5 108h2v2h-2zM431.5 110h2v2h-2zM413.5 112h2v2h-2zM415.5 112h2v2h-2zM355.5 116h2v2h-2zM355.5 118h2v2h-2zM357.5 118h2v2h-2zM415.5 118h2v2h-2zM421.5 120h2v2h-2zM355.5 122h2v2h-2zM351.5 124h2v2h-2zM353.5 124h2v2h-2zM417.5 124h2v2h-2zM419.5 124h2v2h-2zM423.5 126h2v2h-2z"/><path fill="#2853d9" d="M423.5 0h2v2h-2zM421.5 2h2v2h-2zM415.5 8h2v2h-2zM417.5 10h2v2h-2zM419.5 10h2v2h-2zM365.5 12h2v2h-2zM417.5 12h2v2h-2zM413.5 18h2v2h-2zM415.5 18h2v2h-2zM357.5 20h2v2h-2zM351.5 30h2v2h-2zM355.5 30h2v2h-2zM357.5 30h2v2h-2zM423.5 30h2v2h-2zM361.5 32h2v2h-2zM361.5 34h2v2h-2zM413.5 38h2v2h-2zM363.5 40h2v2h-2zM361.5 42h2v2h-2zM415.5 42h2v2h-2zM417.5 42h2v2h-2zM417.5 48h2v2h-2zM419.5 48h2v2h-2zM423.5 48h2v2h-2zM357.5 50h2v2h-2zM363.5 52h2v2h-2zM409.5 52h2v2h-2zM357.5 62h2v2h-2zM359.5 62h2v2h-2zM353.5 82h2v2h-2zM421.5 82h2v2h-2zM359.5 84h2v2h-2zM419.5 84h2v2h-2zM351.5 86h2v2h-2zM359.5 86h2v2h-2zM423.5 86h2v2h-2zM363.5 92h2v2h-2zM361.5 94h2v2h-2zM413.5 94h2v2h-2zM415.5 94h2v2h-2zM359.5 96h2v2h-2zM427.5 96h2v2h-2zM353.5 98h2v2h-2zM359.5 98h2v2h-2zM361.5 102h2v2h-2zM355.5 106h2v2h-2zM425.5 110h2v2h-2zM427.5 110h2v2h-2zM363.5 114h2v2h-2zM365.5 114h2v2h-2zM413.5 114h2v2h-2zM361.5 116h2v2h-2zM417.5 118h2v2h-2zM363.5 120h2v2h-2zM419.5 120h2v2h-2zM365.5 122h2v2h-2zM415.5 122h2v2h-2zM421.5 126h2v2h-2z"/><path fill="#2e60e4" d="M351.5 0h2v2h-2zM353.5 0h2v2h-2zM419.5 0h2v2h-2zM359.5 2h2v2h-2zM365.5 6h2v2h-2zM367.5 6h2v2h-2zM413.5 10h2v2h-2zM359.5 14h2v2h-2zM359.5 16h2v2h-2zM419.5 22h2v2h-2zM355.5 24h2v2h-2zM359.5 24h2v2h-2zM361.5 24h2v2h-2zM419.5 24h2v2h-2zM413.5 26h2v2h-2zM347.5 28h2v2h-2zM351.5 28h2v2h-2zM353.5 28h2v2h-2zM417.5 28h2v2h-2zM427.5 28h2v2h-2zM425.5 30h2v2h-2zM365.5 32h2v2h-2zM409.5 32h2v2h-2zM367.5 38h2v2h-2zM411.5 38h2v2h-2zM359.5 42h2v2h-2zM411.5 42h2v2h-2zM361.5 44h2v2h-2zM415.5 44h2v2h-2zM415.5 46h2v2h-2zM357.5 48h2v2h-2zM359.5 48h2v2h-2zM415.5 48h2v2h-2zM413.5 50h2v2h-2zM415.5 50h2v2h-2zM361.5 52h2v2h-2zM411.5 54h2v2h-2zM365.5 58h2v2h-2zM409.5 58h2v2h-2zM413.5 62h2v2h-2zM419.5 80h2v2h-2zM357.5 86h2v2h-2zM417.5 86h2v2h-2zM419.5 86h2v2h-2zM363.5 88h2v2h-2zM367.5 88h2v2h-2zM419.5 98h2v2h-2zM357.5 100h2v2h-2zM359.5 100h2v2h-2zM423.5 100h2v2h-2zM421.5 104h2v2h-2zM347.5 108h2v2h-2zM349.5 108h2v2h-2zM423.5 110h2v2h-2zM429.5 110h2v2h-2zM359.5 112h2v2h-2zM363.5 112h2v2h-2zM411.5 112h2v2h-2zM357.5 116h2v2h-2zM359.5 116h2v2h-2zM415.5 116h2v2h-2zM361.5 118h2v2h-2zM413.5 118h2v2h-2zM367.5 120h2v2h-2zM417.5 120h2v2h-2zM357.5 122h2v2h-2zM359.5 124h2v2h-2zM421.5 124h2v2h-2zM353.5 126h2v2h-2zM355.5 126h2v2h-2z"/><path fill="#346cf0" d="M421.5 0h2v2h-2zM361.5 16h2v2h-2zM415.5 16h2v2h-2zM363.5 18h2v2h-2zM413.5 20h2v2h-2zM357.5 22h2v2h-2zM417.5 24h2v2h-2zM361.5 26h2v2h-2zM363.5 26h2v2h-2zM421.5 28h2v2h-2zM425.5 28h2v2h-2zM353.5 30h2v2h-2zM379.5 34h2v2h-2zM363.5 36h2v2h-2zM411.5 36h2v2h-2zM365.5 38h2v2h-2zM367.5 40h2v2h-2zM417.5 40h2v2h-2zM377.5 42h2v2h-2zM399.5 42h2v2h-2zM413.5 42h2v2h-2zM419.5 44h2v2h-2zM359.5 50h2v2h-2zM399.5 50h2v2h-2zM409.5 54h2v2h-2zM413.5 54h2v2h-2zM381.5 56h2v2h-2zM367.5 58h2v2h-2zM409.5 60h2v2h-2zM355.5 84h2v2h-2zM357.5 84h2v2h-2zM421.5 84h2v2h-2zM355.5 86h2v2h-2zM365.5 88h2v2h-2zM415.5 88h2v2h-2zM363.5 90h2v2h-2zM365.5 90h2v2h-2zM363.5 94h2v2h-2zM419.5 96h2v2h-2zM365.5 98h2v2h-2zM371.5 100h2v2h-2zM421.5 102h2v2h-2zM357.5 106h2v2h-2zM359.5 110h2v2h-2zM361.5 112h2v2h-2zM365.5 112h2v2h-2zM367.5 112h2v2h-2zM411.5 114h2v2h-2zM365.5 116h2v2h-2zM367.5 116h2v2h-2zM411.5 116h2v2h-2zM359.5 118h2v2h-2zM411.5 118h2v2h-2zM365.5 120h2v2h-2zM415.5 120h2v2h-2zM359.5 122h2v2h-2zM367.5 122h2v2h-2zM357.5 124h2v2h-2zM377.5 124h2v2h-2zM351.5 126h2v2h-2zM357.5 126h2v2h-2z"/><path fill="#3a79fb" d="M371.5 0h2v2h-2zM373.5 0h2v2h-2zM407.5 0h2v2h-2zM371.5 2h2v2h-2zM361.5 4h2v2h-2zM361.5 8h2v2h-2zM415.5 10h2v2h-2zM377.5 12h2v2h-2zM377.5 14h2v2h-2zM365.5 18h2v2h-2zM371.5 20h2v2h-2zM403.5 20h2v2h-2zM363.5 24h2v2h-2zM421.5 24h2v2h-2zM419.5 28h2v2h-2zM423.5 28h2v2h-2zM359.5 30h2v2h-2zM419.5 30h2v2h-2zM421.5 30h2v2h-2zM377.5 32h2v2h-2zM377.5 34h2v2h-2zM395.5 36h2v2h-2zM409.5 36h2v2h-2zM379.5 38h2v2h-2zM381.5 38h2v2h-2zM397.5 38h2v2h-2zM377.5 40h2v2h-2zM401.5 40h2v2h-2zM419.5 40h2v2h-2zM375.5 42h2v2h-2zM379.5 42h2v2h-2zM375.5 44h2v2h-2zM401.5 44h2v2h-2zM417.5 44h2v2h-2zM359.5 46h2v2h-2zM361.5 46h2v2h-2zM363.5 46h2v2h-2zM401.5 46h2v2h-2zM377.5 48h2v2h-2zM399.5 48h2v2h-2zM375.5 50h2v2h-2zM379.5 50h2v2h-2zM379.5 52h2v2h-2zM397.5 52h2v2h-2zM397.5 54h2v2h-2zM397.5 56h2v2h-2zM407.5 56h2v2h-2zM397.5 58h2v2h-2zM365.5 60h2v2h-2zM379.5 60h2v2h-2zM375.5 62h2v2h-2zM377.5 62h2v2h-2zM379.5 62h2v2h-2zM421.5 86h2v2h-2zM401.5 88h2v2h-2zM361.5 92h2v2h-2zM415.5 92h2v2h-2zM365.5 94h2v2h-2zM417.5 96h2v2h-2zM421.5 96h2v2h-2zM419.5 102h2v2h-2zM355.5 104h2v2h-2zM363.5 116h2v2h-2zM413.5 116h2v2h-2zM363.5 118h2v2h-2zM377.5 118h2v2h-2zM379.5 118h2v2h-2zM399.5 118h2v2h-2zM379.5 120h2v2h-2zM413.5 120h2v2h-2zM361.5 122h2v2h-2zM363.5 122h2v2h-2zM413.5 122h2v2h-2zM373.5 124h2v2h-2zM375.5 124h2v2h-2zM399.5 124h2v2h-2zM413.5 124h2v2h-2z"/><path fill="#4482f5" d="M405.5 0h2v2h-2zM403.5 2h2v2h-2zM401.5 12h2v2h-2zM373.5 14h2v2h-2zM401.5 14h2v2h-2zM417.5 14h2v2h-2zM411.5 18h2v2h-2zM375.5 20h2v2h-2zM401.5 20h2v2h-2zM359.5 22h2v2h-2zM355.5 28h2v2h-2zM411.5 28h2v2h-2zM417.5 30h2v2h-2zM363.5 32h2v2h-2zM379.5 32h2v2h-2zM363.5 34h2v2h-2zM395.5 34h2v2h-2zM397.5 34h2v2h-2zM413.5 34h2v2h-2zM367.5 36h2v2h-2zM379.5 36h2v2h-2zM381.5 36h2v2h-2zM397.5 36h2v2h-2zM363.5 44h2v2h-2zM399.5 44h2v2h-2zM375.5 46h2v2h-2zM397.5 46h2v2h-2zM379.5 48h2v2h-2zM399.5 52h2v2h-2zM361.5 54h2v2h-2zM395.5 54h2v2h-2zM363.5 56h2v2h-2zM407.5 58h2v2h-2zM377.5 60h2v2h-2zM381.5 60h2v2h-2zM397.5 60h2v2h-2zM379.5 88h2v2h-2zM397.5 88h2v2h-2zM399.5 88h2v2h-2zM367.5 90h2v2h-2zM415.5 90h2v2h-2zM363.5 98h2v2h-2zM417.5 98h2v2h-2zM381.5 112h2v2h-2zM393.5 112h2v2h-2zM395.5 112h2v2h-2zM397.5 112h2v2h-2zM409.5 112h2v2h-2zM409.5 114h2v2h-2zM377.5 120h2v2h-2zM401.5 120h2v2h-2zM415.5 124h2v2h-2zM417.5 126h2v2h-2zM419.5 126h2v2h-2z"/><path fill="#508ae6" d="M357.5 0h2v2h-2zM369.5 0h2v2h-2zM361.5 2h2v2h-2zM407.5 2h2v2h-2zM369.5 6h2v2h-2zM413.5 8h2v2h-2zM411.5 10h2v2h-2zM403.5 12h2v2h-2zM415.5 12h2v2h-2zM363.5 14h2v2h-2zM405.5 14h2v2h-2zM359.5 20h2v2h-2zM413.5 24h2v2h-2zM365.5 28h2v2h-2zM367.5 30h2v2h-2zM411.5 30h2v2h-2zM381.5 32h2v2h-2zM397.5 32h2v2h-2zM381.5 34h2v2h-2zM411.5 34h2v2h-2zM369.5 36h2v2h-2zM407.5 36h2v2h-2zM369.5 38h2v2h-2zM395.5 38h2v2h-2zM407.5 38h2v2h-2zM409.5 38h2v2h-2zM363.5 42h2v2h-2zM397.5 44h2v2h-2zM413.5 44h2v2h-2zM377.5 46h2v2h-2zM399.5 46h2v2h-2zM361.5 48h2v2h-2zM375.5 48h2v2h-2zM397.5 48h2v2h-2zM401.5 48h2v2h-2zM377.5 50h2v2h-2zM397.5 50h2v2h-2zM401.5 50h2v2h-2zM411.5 50h2v2h-2zM365.5 54h2v2h-2zM379.5 54h2v2h-2zM399.5 54h2v2h-2zM395.5 56h2v2h-2zM369.5 58h2v2h-2zM399.5 58h2v2h-2zM363.5 62h2v2h-2zM397.5 62h2v2h-2zM399.5 62h2v2h-2zM401.5 62h2v2h-2zM361.5 100h2v2h-2zM405.5 100h2v2h-2zM421.5 106h2v2h-2zM351.5 108h2v2h-2zM423.5 108h2v2h-2zM379.5 112h2v2h-2zM409.5 116h2v2h-2zM381.5 118h2v2h-2zM397.5 118h2v2h-2zM399.5 120h2v2h-2zM401.5 124h2v2h-2zM411.5 124h2v2h-2z"/><path fill="#5b92d6" d="M403.5 0h2v2h-2zM369.5 2h2v2h-2zM405.5 2h2v2h-2zM419.5 2h2v2h-2zM365.5 4h2v2h-2zM415.5 4h2v2h-2zM363.5 10h2v2h-2zM365.5 10h2v2h-2zM361.5 14h2v2h-2zM375.5 14h2v2h-2zM403.5 14h2v2h-2zM415.5 14h2v2h-2zM363.5 16h2v2h-2zM411.5 16h2v2h-2zM413.5 16h2v2h-2zM361.5 20h2v2h-2zM409.5 20h2v2h-2zM417.5 22h2v2h-2zM367.5 24h2v2h-2zM365.5 26h2v2h-2zM411.5 26h2v2h-2zM357.5 28h2v2h-2zM367.5 28h2v2h-2zM367.5 32h2v2h-2zM369.5 32h2v2h-2zM395.5 32h2v2h-2zM405.5 32h2v2h-2zM365.5 34h2v2h-2zM399.5 34h2v2h-2zM369.5 40h2v2h-2zM379.5 40h2v2h-2zM397.5 40h2v2h-2zM399.5 40h2v2h-2zM365.5 42h2v2h-2zM397.5 42h2v2h-2zM365.5 44h2v2h-2zM377.5 44h2v2h-2zM365.5 46h2v2h-2zM411.5 46h2v2h-2zM363.5 48h2v2h-2zM373.5 48h2v2h-2zM409.5 48h2v2h-2zM411.5 48h2v2h-2zM409.5 50h2v2h-2zM367.5 52h2v2h-2zM377.5 52h2v2h-2zM375.5 54h2v2h-2zM377.5 54h2v2h-2zM365.5 56h2v2h-2zM377.5 56h2v2h-2zM403.5 56h2v2h-2zM405.5 56h2v2h-2zM371.5 58h2v2h-2zM377.5 58h2v2h-2zM399.5 60h2v2h-2zM407.5 60h2v2h-2zM365.5 62h2v2h-2zM377.5 88h2v2h-2zM409.5 88h2v2h-2zM413.5 90h2v2h-2zM409.5 94h2v2h-2zM363.5 96h2v2h-2zM369.5 100h2v2h-2zM407.5 100h2v2h-2zM409.5 100h2v2h-2zM363.5 102h2v2h-2zM371.5 112h2v2h-2zM407.5 112h2v2h-2zM365.5 118h2v2h-2zM369.5 120h2v2h-2zM409.5 122h2v2h-2zM411.5 122h2v2h-2zM415.5 126h2v2h-2z"/><path fill="#679ac7" d="M411.5 0h2v2h-2zM415.5 0h2v2h-2zM363.5 2h2v2h-2zM415.5 2h2v2h-2zM367.5 4h2v2h-2zM371.5 6h2v2h-2zM363.5 8h2v2h-2zM365.5 8h2v2h-2zM367.5 10h2v2h-2zM409.5 10h2v2h-2zM367.5 12h2v2h-2zM375.5 12h2v2h-2zM399.5 12h2v2h-2zM367.5 14h2v2h-2zM413.5 14h2v2h-2zM367.5 16h2v2h-2zM369.5 18h2v2h-2zM373.5 20h2v2h-2zM361.5 22h2v2h-2zM365.5 24h2v2h-2zM407.5 26h2v2h-2zM409.5 26h2v2h-2zM365.5 30h2v2h-2zM371.5 36h2v2h-2zM371.5 38h2v2h-2zM403.5 38h2v2h-2zM405.5 38h2v2h-2zM403.5 40h2v2h-2zM409.5 40h2v2h-2zM411.5 40h2v2h-2zM405.5 42h2v2h-2zM407.5 42h2v2h-2zM409.5 42h2v2h-2zM367.5 44h2v2h-2zM379.5 44h2v2h-2zM411.5 44h2v2h-2zM369.5 46h2v2h-2zM379.5 46h2v2h-2zM361.5 50h2v2h-2zM369.5 52h2v2h-2zM395.5 52h2v2h-2zM403.5 52h2v2h-2zM405.5 52h2v2h-2zM363.5 54h2v2h-2zM405.5 54h2v2h-2zM407.5 54h2v2h-2zM367.5 56h2v2h-2zM369.5 56h2v2h-2zM379.5 56h2v2h-2zM379.5 58h2v2h-2zM405.5 58h2v2h-2zM409.5 62h2v2h-2zM411.5 86h2v2h-2zM407.5 88h2v2h-2zM413.5 88h2v2h-2zM369.5 90h2v2h-2zM411.5 90h2v2h-2zM365.5 92h2v2h-2zM411.5 92h2v2h-2zM367.5 94h2v2h-2zM361.5 96h2v2h-2zM409.5 96h2v2h-2zM415.5 96h2v2h-2zM417.5 100h2v2h-2zM419.5 100h2v2h-2zM413.5 102h2v2h-2zM415.5 102h2v2h-2zM357.5 104h2v2h-2zM359.5 104h2v2h-2zM419.5 104h2v2h-2zM423.5 106h2v2h-2zM353.5 108h2v2h-2zM355.5 108h2v2h-2zM363.5 110h2v2h-2zM367.5 114h2v2h-2zM369.5 114h2v2h-2zM407.5 114h2v2h-2zM367.5 118h2v2h-2zM395.5 118h2v2h-2zM371.5 120h2v2h-2zM367.5 124h2v2h-2zM359.5 126h2v2h-2zM363.5 126h2v2h-2z"/><path fill="#73a1b8" d="M361.5 0h2v2h-2zM365.5 0h2v2h-2zM367.5 0h2v2h-2zM417.5 0h2v2h-2zM365.5 2h2v2h-2zM413.5 2h2v2h-2zM363.5 4h2v2h-2zM417.5 4h2v2h-2zM413.5 6h2v2h-2zM369.5 8h2v2h-2zM409.5 8h2v2h-2zM411.5 8h2v2h-2zM405.5 10h2v2h-2zM413.5 12h2v2h-2zM365.5 16h2v2h-2zM407.5 16h2v2h-2zM367.5 18h2v2h-2zM405.5 18h2v2h-2zM411.5 20h2v2h-2zM411.5 22h2v2h-2zM415.5 24h2v2h-2zM415.5 28h2v2h-2zM361.5 30h2v2h-2zM415.5 30h2v2h-2zM403.5 32h2v2h-2zM407.5 32h2v2h-2zM367.5 34h2v2h-2zM407.5 34h2v2h-2zM409.5 34h2v2h-2zM375.5 36h2v2h-2zM413.5 40h2v2h-2zM415.5 40h2v2h-2zM367.5 42h2v2h-2zM369.5 44h2v2h-2zM407.5 44h2v2h-2zM409.5 44h2v2h-2zM367.5 46h2v2h-2zM371.5 46h2v2h-2zM407.5 46h2v2h-2zM413.5 48h2v2h-2zM365.5 52h2v2h-2zM371.5 52h2v2h-2zM407.5 52h2v2h-2zM367.5 54h2v2h-2zM371.5 54h2v2h-2zM403.5 54h2v2h-2zM367.5 60h2v2h-2zM369.5 60h2v2h-2zM373.5 60h2v2h-2zM361.5 62h2v2h-2zM407.5 62h2v2h-2zM411.5 62h2v2h-2zM377.5 82h2v2h-2zM377.5 84h2v2h-2zM365.5 86h2v2h-2zM377.5 86h2v2h-2zM409.5 86h2v2h-2zM367.5 92h2v2h-2zM413.5 92h2v2h-2zM411.5 94h2v2h-2zM411.5 96h2v2h-2zM413.5 96h2v2h-2zM367.5 98h2v2h-2zM411.5 98h2v2h-2zM415.5 98h2v2h-2zM363.5 100h2v2h-2zM417.5 102h2v2h-2zM359.5 106h2v2h-2zM361.5 106h2v2h-2zM357.5 108h2v2h-2zM359.5 108h2v2h-2zM361.5 108h2v2h-2zM419.5 108h2v2h-2zM421.5 108h2v2h-2zM415.5 110h2v2h-2zM373.5 112h2v2h-2zM405.5 112h2v2h-2zM405.5 114h2v2h-2zM369.5 116h2v2h-2zM371.5 116h2v2h-2zM403.5 116h2v2h-2zM405.5 116h2v2h-2zM405.5 118h2v2h-2zM409.5 118h2v2h-2zM411.5 120h2v2h-2zM361.5 124h2v2h-2zM363.5 124h2v2h-2zM369.5 124h2v2h-2zM407.5 124h2v2h-2zM409.5 126h2v2h-2zM413.5 126h2v2h-2z"/><path fill="#7ea9a8" d="M359.5 0h2v2h-2zM363.5 0h2v2h-2zM367.5 2h2v2h-2zM417.5 2h2v2h-2zM407.5 4h2v2h-2zM413.5 4h2v2h-2zM407.5 6h2v2h-2zM409.5 6h2v2h-2zM411.5 6h2v2h-2zM369.5 10h2v2h-2zM369.5 12h2v2h-2zM371.5 12h2v2h-2zM411.5 12h2v2h-2zM411.5 14h2v2h-2zM403.5 16h2v2h-2zM405.5 16h2v2h-2zM409.5 16h2v2h-2zM407.5 18h2v2h-2zM409.5 18h2v2h-2zM369.5 20h2v2h-2zM363.5 22h2v2h-2zM367.5 22h2v2h-2zM413.5 22h2v2h-2zM415.5 22h2v2h-2zM407.5 24h2v2h-2zM405.5 26h2v2h-2zM359.5 28h2v2h-2zM401.5 32h2v2h-2zM369.5 34h2v2h-2zM371.5 34h2v2h-2zM373.5 36h2v2h-2zM405.5 36h2v2h-2zM375.5 38h2v2h-2zM401.5 38h2v2h-2zM371.5 40h2v2h-2zM407.5 40h2v2h-2zM371.5 42h2v2h-2zM409.5 46h2v2h-2zM413.5 46h2v2h-2zM365.5 48h2v2h-2zM369.5 48h2v2h-2zM405.5 48h2v2h-2zM363.5 50h2v2h-2zM365.5 50h2v2h-2zM367.5 50h2v2h-2zM371.5 50h2v2h-2zM401.5 54h2v2h-2zM401.5 56h2v2h-2zM401.5 58h2v2h-2zM403.5 58h2v2h-2zM403.5 60h2v2h-2zM405.5 60h2v2h-2zM367.5 62h2v2h-2zM369.5 62h2v2h-2zM375.5 76h2v2h-2zM401.5 76h2v2h-2zM399.5 82h2v2h-2zM401.5 82h2v2h-2zM367.5 86h2v2h-2zM369.5 88h2v2h-2zM375.5 88h2v2h-2zM411.5 88h2v2h-2zM373.5 90h2v2h-2zM407.5 90h2v2h-2zM369.5 92h2v2h-2zM365.5 96h2v2h-2zM367.5 96h2v2h-2zM369.5 98h2v2h-2zM409.5 98h2v2h-2zM413.5 98h2v2h-2zM415.5 100h2v2h-2zM421.5 100h2v2h-2zM411.5 102h2v2h-2zM363.5 104h2v2h-2zM413.5 104h2v2h-2zM415.5 104h2v2h-2zM417.5 104h2v2h-2zM419.5 106h2v2h-2zM363.5 108h2v2h-2zM361.5 110h2v2h-2zM417.5 110h2v2h-2zM421.5 110h2v2h-2zM369.5 112h2v2h-2zM375.5 112h2v2h-2zM401.5 112h2v2h-2zM373.5 114h2v2h-2zM377.5 114h2v2h-2zM407.5 116h2v2h-2zM373.5 120h2v2h-2zM409.5 120h2v2h-2zM369.5 122h2v2h-2zM371.5 122h2v2h-2zM407.5 122h2v2h-2zM409.5 124h2v2h-2zM407.5 126h2v2h-2z"/><path fill="#8ab199" d="M409.5 0h2v2h-2zM413.5 0h2v2h-2zM409.5 2h2v2h-2zM373.5 4h2v2h-2zM405.5 4h2v2h-2zM409.5 4h2v2h-2zM367.5 8h2v2h-2zM373.5 8h2v2h-2zM405.5 12h2v2h-2zM365.5 14h2v2h-2zM371.5 14h2v2h-2zM369.5 16h2v2h-2zM363.5 20h2v2h-2zM405.5 20h2v2h-2zM407.5 20h2v2h-2zM365.5 22h2v2h-2zM371.5 22h2v2h-2zM371.5 24h2v2h-2zM411.5 24h2v2h-2zM367.5 26h2v2h-2zM369.5 26h2v2h-2zM371.5 26h2v2h-2zM363.5 28h2v2h-2zM363.5 30h2v2h-2zM413.5 30h2v2h-2zM371.5 32h2v2h-2zM375.5 32h2v2h-2zM399.5 32h2v2h-2zM373.5 38h2v2h-2zM399.5 38h2v2h-2zM401.5 42h2v2h-2zM403.5 42h2v2h-2zM373.5 44h2v2h-2zM367.5 48h2v2h-2zM403.5 48h2v2h-2zM405.5 50h2v2h-2zM369.5 54h2v2h-2zM373.5 54h2v2h-2zM373.5 56h2v2h-2zM373.5 58h2v2h-2zM371.5 60h2v2h-2zM371.5 62h2v2h-2zM369.5 78h2v2h-2zM401.5 78h2v2h-2zM369.5 80h2v2h-2zM375.5 80h2v2h-2zM407.5 82h2v2h-2zM409.5 82h2v2h-2zM401.5 84h2v2h-2zM375.5 86h2v2h-2zM399.5 86h2v2h-2zM401.5 86h2v2h-2zM371.5 88h2v2h-2zM373.5 88h2v2h-2zM403.5 88h2v2h-2zM371.5 90h2v2h-2zM409.5 90h2v2h-2zM371.5 92h2v2h-2zM373.5 92h2v2h-2zM405.5 92h2v2h-2zM409.5 92h2v2h-2zM369.5 94h2v2h-2zM373.5 94h2v2h-2zM375.5 94h2v2h-2zM403.5 94h2v2h-2zM407.5 94h2v2h-2zM371.5 96h2v2h-2zM371.5 98h2v2h-2zM407.5 98h2v2h-2zM413.5 100h2v2h-2zM365.5 102h2v2h-2zM409.5 104h2v2h-2zM363.5 106h2v2h-2zM413.5 108h2v2h-2zM417.5 108h2v2h-2zM365.5 110h2v2h-2zM419.5 110h2v2h-2zM403.5 112h2v2h-2zM373.5 116h2v2h-2zM369.5 118h2v2h-2zM371.5 118h2v2h-2zM401.5 118h2v2h-2zM407.5 118h2v2h-2zM375.5 120h2v2h-2zM407.5 120h2v2h-2zM373.5 122h2v2h-2zM405.5 122h2v2h-2zM365.5 124h2v2h-2zM361.5 126h2v2h-2zM365.5 126h2v2h-2z"/><path fill="#96b98a" d="M369.5 4h2v2h-2zM411.5 4h2v2h-2zM405.5 8h2v2h-2zM371.5 10h2v2h-2zM399.5 10h2v2h-2zM401.5 10h2v2h-2zM403.5 10h2v2h-2zM407.5 10h2v2h-2zM407.5 12h2v2h-2zM409.5 12h2v2h-2zM407.5 14h2v2h-2zM409.5 14h2v2h-2zM371.5 16h2v2h-2zM371.5 18h2v2h-2zM369.5 24h2v2h-2zM373.5 26h2v2h-2zM373.5 32h2v2h-2zM403.5 34h2v2h-2zM399.5 36h2v2h-2zM403.5 36h2v2h-2zM373.5 40h2v2h-2zM375.5 40h2v2h-2zM369.5 42h2v2h-2zM371.5 44h2v2h-2zM405.5 44h2v2h-2zM407.5 48h2v2h-2zM407.5 50h2v2h-2zM373.5 52h2v2h-2zM399.5 56h2v2h-2zM375.5 58h2v2h-2zM375.5 60h2v2h-2zM401.5 60h2v2h-2zM369.5 74h2v2h-2zM373.5 78h2v2h-2zM375.5 78h2v2h-2zM407.5 78h2v2h-2zM373.5 80h2v2h-2zM401.5 80h2v2h-2zM367.5 82h2v2h-2zM373.5 82h2v2h-2zM375.5 82h2v2h-2zM405.5 82h2v2h-2zM367.5 84h2v2h-2zM373.5 84h2v2h-2zM375.5 84h2v2h-2zM399.5 84h2v2h-2zM409.5 84h2v2h-2zM369.5 86h2v2h-2zM371.5 86h2v2h-2zM405.5 88h2v2h-2zM371.5 94h2v2h-2zM369.5 96h2v2h-2zM405.5 98h2v2h-2zM365.5 100h2v2h-2zM367.5 100h2v2h-2zM369.5 102h2v2h-2zM371.5 102h2v2h-2zM407.5 102h2v2h-2zM361.5 104h2v2h-2zM411.5 104h2v2h-2zM365.5 106h2v2h-2zM413.5 106h2v2h-2zM417.5 106h2v2h-2zM367.5 108h2v2h-2zM413.5 110h2v2h-2zM399.5 112h2v2h-2zM371.5 114h2v2h-2zM397.5 114h2v2h-2zM403.5 114h2v2h-2zM399.5 116h2v2h-2zM401.5 116h2v2h-2zM373.5 118h2v2h-2zM403.5 118h2v2h-2zM375.5 122h2v2h-2zM403.5 124h2v2h-2zM367.5 126h2v2h-2zM405.5 126h2v2h-2zM411.5 126h2v2h-2z"/><path fill="#a1c17a" d="M401.5 4h2v2h-2zM373.5 6h2v2h-2zM371.5 8h2v2h-2zM407.5 8h2v2h-2zM373.5 10h2v2h-2zM375.5 10h2v2h-2zM373.5 12h2v2h-2zM369.5 14h2v2h-2zM399.5 16h2v2h-2zM373.5 18h2v2h-2zM401.5 18h2v2h-2zM365.5 20h2v2h-2zM367.5 20h2v2h-2zM369.5 22h2v2h-2zM373.5 22h2v2h-2zM373.5 24h2v2h-2zM409.5 24h2v2h-2zM361.5 28h2v2h-2zM413.5 28h2v2h-2zM375.5 34h2v2h-2zM401.5 34h2v2h-2zM405.5 34h2v2h-2zM405.5 40h2v2h-2zM373.5 42h2v2h-2zM403.5 44h2v2h-2zM371.5 48h2v2h-2zM369.5 50h2v2h-2zM403.5 50h2v2h-2zM401.5 52h2v2h-2zM371.5 56h2v2h-2zM403.5 62h2v2h-2zM405.5 62h2v2h-2zM403.5 64h2v2h-2zM403.5 66h2v2h-2zM373.5 68h2v2h-2zM403.5 68h2v2h-2zM405.5 68h2v2h-2zM373.5 70h2v2h-2zM403.5 70h2v2h-2zM373.5 72h2v2h-2zM403.5 72h2v2h-2zM407.5 74h2v2h-2zM369.5 76h2v2h-2zM371.5 76h2v2h-2zM373.5 76h2v2h-2zM407.5 76h2v2h-2zM369.5 82h2v2h-2zM403.5 82h2v2h-2zM369.5 84h2v2h-2zM403.5 84h2v2h-2zM407.5 84h2v2h-2zM373.5 86h2v2h-2zM403.5 86h2v2h-2zM405.5 86h2v2h-2zM407.5 86h2v2h-2zM377.5 90h2v2h-2zM403.5 90h2v2h-2zM407.5 92h2v2h-2zM405.5 94h2v2h-2zM407.5 96h2v2h-2zM367.5 102h2v2h-2zM405.5 102h2v2h-2zM371.5 104h2v2h-2zM405.5 106h2v2h-2zM409.5 106h2v2h-2zM415.5 106h2v2h-2zM411.5 110h2v2h-2zM375.5 114h2v2h-2zM379.5 114h2v2h-2zM399.5 114h2v2h-2zM401.5 114h2v2h-2zM377.5 116h2v2h-2zM397.5 116h2v2h-2zM405.5 120h2v2h-2zM401.5 122h2v2h-2zM405.5 124h2v2h-2zM403.5 126h2v2h-2z"/><path fill="#adc86b" d="M411.5 2h2v2h-2zM371.5 4h2v2h-2zM399.5 4h2v2h-2zM403.5 4h2v2h-2zM375.5 6h2v2h-2zM403.5 6h2v2h-2zM405.5 6h2v2h-2zM399.5 8h2v2h-2zM403.5 8h2v2h-2zM377.5 18h2v2h-2zM403.5 18h2v2h-2zM407.5 22h2v2h-2zM409.5 22h2v2h-2zM405.5 24h2v2h-2zM373.5 34h2v2h-2zM377.5 36h2v2h-2zM401.5 36h2v2h-2zM377.5 38h2v2h-2zM373.5 46h2v2h-2zM403.5 46h2v2h-2zM405.5 46h2v2h-2zM373.5 50h2v2h-2zM375.5 52h2v2h-2zM375.5 56h2v2h-2zM373.5 62h2v2h-2zM371.5 64h2v2h-2zM373.5 64h2v2h-2zM371.5 66h2v2h-2zM373.5 66h2v2h-2zM405.5 66h2v2h-2zM371.5 68h2v2h-2zM403.5 74h2v2h-2zM403.5 76h2v2h-2zM371.5 78h2v2h-2zM403.5 80h2v2h-2zM407.5 80h2v2h-2zM371.5 82h2v2h-2zM371.5 84h2v2h-2zM405.5 84h2v2h-2zM375.5 90h2v2h-2zM399.5 90h2v2h-2zM401.5 90h2v2h-2zM405.5 90h2v2h-2zM403.5 92h2v2h-2zM399.5 94h2v2h-2zM373.5 96h2v2h-2zM375.5 96h2v2h-2zM405.5 96h2v2h-2zM373.5 98h2v2h-2zM375.5 98h2v2h-2zM411.5 100h2v2h-2zM373.5 102h2v2h-2zM409.5 102h2v2h-2zM365.5 104h2v2h-2zM367.5 104h2v2h-2zM407.5 104h2v2h-2zM407.5 106h2v2h-2zM411.5 106h2v2h-2zM365.5 108h2v2h-2zM411.5 108h2v2h-2zM415.5 108h2v2h-2zM367.5 110h2v2h-2zM377.5 112h2v2h-2zM375.5 116h2v2h-2zM395.5 116h2v2h-2zM403.5 120h2v2h-2zM403.5 122h2v2h-2zM371.5 124h2v2h-2zM369.5 126h2v2h-2zM371.5 126h2v2h-2zM373.5 126h2v2h-2z"/><path fill="#b9d05c" d="M401.5 6h2v2h-2zM375.5 8h2v2h-2zM377.5 8h2v2h-2zM401.5 16h2v2h-2zM375.5 18h2v2h-2zM375.5 22h2v2h-2zM405.5 22h2v2h-2zM375.5 24h2v2h-2zM377.5 24h2v2h-2zM401.5 24h2v2h-2zM403.5 26h2v2h-2zM371.5 70h2v2h-2zM405.5 70h2v2h-2zM371.5 74h2v2h-2zM373.5 74h2v2h-2zM405.5 76h2v2h-2zM403.5 78h2v2h-2zM405.5 78h2v2h-2zM371.5 80h2v2h-2zM405.5 80h2v2h-2zM377.5 96h2v2h-2zM403.5 96h2v2h-2zM405.5 104h2v2h-2zM369.5 108h2v2h-2zM409.5 110h2v2h-2zM381.5 116h2v2h-2zM375.5 118h2v2h-2z"/><path fill="#c4d84c" d="M375.5 4h2v2h-2zM399.5 6h2v2h-2zM401.5 8h2v2h-2zM373.5 16h2v2h-2zM399.5 18h2v2h-2zM403.5 22h2v2h-2zM403.5 24h2v2h-2zM405.5 64h2v2h-2zM371.5 72h2v2h-2zM405.5 72h2v2h-2zM405.5 74h2v2h-2zM375.5 92h2v2h-2zM401.5 92h2v2h-2zM401.5 94h2v2h-2zM401.5 96h2v2h-2zM369.5 104h2v2h-2zM367.5 106h2v2h-2zM369.5 110h2v2h-2zM407.5 110h2v2h-2zM381.5 114h2v2h-2zM379.5 116h2v2h-2zM377.5 122h2v2h-2z"/><path fill="#d0e03d" d="M377.5 4h2v2h-2zM377.5 6h2v2h-2zM377.5 10h2v2h-2zM397.5 10h2v2h-2zM375.5 16h2v2h-2zM375.5 26h2v2h-2zM401.5 26h2v2h-2zM397.5 90h2v2h-2zM377.5 92h2v2h-2zM399.5 92h2v2h-2zM377.5 94h2v2h-2zM399.5 96h2v2h-2zM403.5 98h2v2h-2zM371.5 108h2v2h-2zM395.5 114h2v2h-2zM399.5 122h2v2h-2zM401.5 126h2v2h-2z"/><path fill="#e8ef1f" d="M377.5 0h2v2h-2zM379.5 6h2v2h-2zM377.5 22h2v2h-2zM371.5 30h2v2h-2zM383.5 36h2v2h-2zM395.5 60h2v2h-2zM379.5 96h2v2h-2zM403.5 102h2v2h-2zM399.5 126h2v2h-2z"/><path fill="#f3f70f" d="M375.5 0h2v2h-2zM377.5 2h2v2h-2zM381.5 2h2v2h-2zM385.5 2h2v2h-2zM401.5 2h2v2h-2zM383.5 4h2v2h-2zM385.5 4h2v2h-2zM391.5 6h2v2h-2zM379.5 8h2v2h-2zM391.5 8h2v2h-2zM397.5 8h2v2h-2zM383.5 10h2v2h-2zM385.5 10h2v2h-2zM383.5 12h2v2h-2zM379.5 14h2v2h-2zM395.5 14h2v2h-2zM397.5 14h2v2h-2zM377.5 16h2v2h-2zM381.5 16h2v2h-2zM393.5 16h2v2h-2zM379.5 18h2v2h-2zM383.5 18h2v2h-2zM395.5 18h2v2h-2zM397.5 18h2v2h-2zM395.5 20h2v2h-2zM379.5 24h2v2h-2zM391.5 24h2v2h-2zM395.5 24h2v2h-2zM397.5 24h2v2h-2zM395.5 26h2v2h-2zM397.5 26h2v2h-2zM375.5 28h2v2h-2zM379.5 28h2v2h-2zM381.5 28h2v2h-2zM393.5 28h2v2h-2zM399.5 28h2v2h-2zM407.5 28h2v2h-2zM409.5 28h2v2h-2zM377.5 30h2v2h-2zM379.5 30h2v2h-2zM385.5 30h2v2h-2zM385.5 32h2v2h-2zM393.5 32h2v2h-2zM391.5 34h2v2h-2zM393.5 34h2v2h-2zM383.5 38h2v2h-2zM391.5 44h2v2h-2zM393.5 44h2v2h-2zM393.5 46h2v2h-2zM393.5 50h2v2h-2zM393.5 54h2v2h-2zM381.5 58h2v2h-2zM383.5 60h2v2h-2zM383.5 62h2v2h-2zM385.5 62h2v2h-2zM393.5 84h2v2h-2zM383.5 86h2v2h-2zM395.5 86h2v2h-2zM381.5 90h2v2h-2zM385.5 90h2v2h-2zM381.5 92h2v2h-2zM393.5 92h2v2h-2zM377.5 98h2v2h-2zM381.5 98h2v2h-2zM383.5 98h2v2h-2zM401.5 98h2v2h-2zM377.5 100h2v2h-2zM381.5 100h2v2h-2zM395.5 100h2v2h-2zM401.5 100h2v2h-2zM403.5 100h2v2h-2zM397.5 102h2v2h-2zM379.5 104h2v2h-2zM393.5 104h2v2h-2zM373.5 106h2v2h-2zM375.5 106h2v2h-2zM395.5 106h2v2h-2zM401.5 106h2v2h-2zM381.5 108h2v2h-2zM407.5 108h2v2h-2zM391.5 110h2v2h-2zM393.5 110h2v2h-2zM383.5 114h2v2h-2zM393.5 114h2v2h-2zM385.5 116h2v2h-2zM383.5 118h2v2h-2zM381.5 120h2v2h-2zM385.5 120h2v2h-2zM393.5 120h2v2h-2zM383.5 122h2v2h-2zM395.5 122h2v2h-2zM379.5 124h2v2h-2zM375.5 126h2v2h-2zM379.5 126h2v2h-2zM383.5 126h2v2h-2z"/><path fill="#ffff00" d="M395.5 0h2v2h-2zM375.5 2h2v2h-2zM391.5 2h2v2h-2zM397.5 2h2v2h-2zM381.5 4h2v2h-2zM393.5 4h2v2h-2zM393.5 8h2v2h-2zM381.5 10h2v2h-2zM395.5 10h2v2h-2zM391.5 12h2v2h-2zM399.5 14h2v2h-2zM379.5 16h2v2h-2zM391.5 16h2v2h-2zM391.5 18h2v2h-2zM379.5 20h2v2h-2zM389.5 20h2v2h-2zM397.5 20h2v2h-2zM379.5 22h2v2h-2zM385.5 22h2v2h-2zM391.5 22h2v2h-2zM399.5 22h2v2h-2zM385.5 24h2v2h-2zM393.5 24h2v2h-2zM381.5 26h2v2h-2zM383.5 26h2v2h-2zM371.5 28h2v2h-2zM373.5 28h2v2h-2zM395.5 28h2v2h-2zM401.5 28h2v2h-2zM395.5 30h2v2h-2zM397.5 30h2v2h-2zM405.5 30h2v2h-2zM407.5 30h2v2h-2zM391.5 32h2v2h-2zM383.5 34h2v2h-2zM385.5 36h2v2h-2zM391.5 36h2v2h-2zM391.5 38h2v2h-2zM385.5 40h2v2h-2zM393.5 42h2v2h-2zM395.5 44h2v2h-2zM385.5 46h2v2h-2zM385.5 48h2v2h-2zM393.5 48h2v2h-2zM395.5 48h2v2h-2zM381.5 50h2v2h-2zM381.5 52h2v2h-2zM383.5 52h2v2h-2zM385.5 52h2v2h-2zM385.5 54h2v2h-2zM383.5 56h2v2h-2zM385.5 56h2v2h-2zM391.5 56h2v2h-2zM391.5 60h2v2h-2zM393.5 60h2v2h-2zM391.5 62h2v2h-2zM393.5 82h2v2h-2zM393.5 86h2v2h-2zM395.5 88h2v2h-2zM383.5 90h2v2h-2zM393.5 90h2v2h-2zM385.5 92h2v2h-2zM379.5 94h2v2h-2zM383.5 94h2v2h-2zM397.5 94h2v2h-2zM391.5 96h2v2h-2zM393.5 96h2v2h-2zM385.5 98h2v2h-2zM391.5 98h2v2h-2zM393.5 98h2v2h-2zM397.5 98h2v2h-2zM373.5 100h2v2h-2zM375.5 100h2v2h-2zM383.5 100h2v2h-2zM391.5 100h2v2h-2zM377.5 102h2v2h-2zM391.5 102h2v2h-2zM401.5 102h2v2h-2zM373.5 104h2v2h-2zM377.5 104h2v2h-2zM383.5 104h2v2h-2zM391.5 104h2v2h-2zM397.5 104h2v2h-2zM369.5 106h2v2h-2zM371.5 106h2v2h-2zM399.5 106h2v2h-2zM377.5 108h2v2h-2zM379.5 108h2v2h-2zM395.5 108h2v2h-2zM405.5 108h2v2h-2zM409.5 108h2v2h-2zM379.5 110h2v2h-2zM397.5 110h2v2h-2zM403.5 110h2v2h-2zM383.5 112h2v2h-2zM383.5 120h2v2h-2zM391.5 120h2v2h-2zM397.5 120h2v2h-2zM379.5 122h2v2h-2zM387.5 122h2v2h-2zM385.5 124h2v2h-2zM391.5 124h2v2h-2zM385.5 126h2v2h-2z"/><path fill="#fff700" d="M379.5 0h2v2h-2zM381.5 0h2v2h-2zM385.5 0h2v2h-2zM393.5 0h2v2h-2zM373.5 2h2v2h-2zM389.5 2h2v2h-2zM379.5 4h2v2h-2zM389.5 4h2v2h-2zM397.5 4h2v2h-2zM381.5 6h2v2h-2zM383.5 6h2v2h-2zM393.5 6h2v2h-2zM383.5 8h2v2h-2zM395.5 8h2v2h-2zM389.5 10h2v2h-2zM393.5 10h2v2h-2zM385.5 12h2v2h-2zM393.5 12h2v2h-2zM381.5 14h2v2h-2zM391.5 14h2v2h-2zM383.5 16h2v2h-2zM395.5 16h2v2h-2zM389.5 18h2v2h-2zM381.5 20h2v2h-2zM383.5 20h2v2h-2zM385.5 20h2v2h-2zM381.5 22h2v2h-2zM383.5 22h2v2h-2zM395.5 22h2v2h-2zM397.5 22h2v2h-2zM381.5 24h2v2h-2zM383.5 24h2v2h-2zM379.5 26h2v2h-2zM383.5 28h2v2h-2zM385.5 28h2v2h-2zM405.5 28h2v2h-2zM373.5 30h2v2h-2zM389.5 30h2v2h-2zM401.5 30h2v2h-2zM387.5 32h2v2h-2zM389.5 32h2v2h-2zM393.5 36h2v2h-2zM389.5 38h2v2h-2zM383.5 40h2v2h-2zM389.5 40h2v2h-2zM395.5 40h2v2h-2zM395.5 42h2v2h-2zM383.5 44h2v2h-2zM383.5 46h2v2h-2zM389.5 48h2v2h-2zM389.5 50h2v2h-2zM391.5 50h2v2h-2zM395.5 50h2v2h-2zM389.5 52h2v2h-2zM391.5 52h2v2h-2zM383.5 54h2v2h-2zM387.5 56h2v2h-2zM383.5 58h2v2h-2zM387.5 58h2v2h-2zM385.5 60h2v2h-2zM381.5 62h2v2h-2zM393.5 62h2v2h-2zM395.5 62h2v2h-2zM383.5 80h2v2h-2zM393.5 80h2v2h-2zM385.5 82h2v2h-2zM381.5 86h2v2h-2zM381.5 88h2v2h-2zM387.5 88h2v2h-2zM391.5 88h2v2h-2zM379.5 90h2v2h-2zM391.5 90h2v2h-2zM395.5 90h2v2h-2zM387.5 92h2v2h-2zM397.5 92h2v2h-2zM385.5 94h2v2h-2zM393.5 94h2v2h-2zM395.5 94h2v2h-2zM381.5 96h2v2h-2zM383.5 96h2v2h-2zM389.5 96h2v2h-2zM399.5 98h2v2h-2zM375.5 102h2v2h-2zM383.5 102h2v2h-2zM387.5 104h2v2h-2zM399.5 104h2v2h-2zM401.5 104h2v2h-2zM373.5 108h2v2h-2zM375.5 108h2v2h-2zM399.5 108h2v2h-2zM371.5 110h2v2h-2zM373.5 110h2v2h-2zM381.5 110h2v2h-2zM385.5 110h2v2h-2zM387.5 110h2v2h-2zM395.5 110h2v2h-2zM385.5 114h2v2h-2zM387.5 114h2v2h-2zM391.5 118h2v2h-2zM389.5 122h2v2h-2zM391.5 122h2v2h-2zM393.5 122h2v2h-2zM397.5 122h2v2h-2zM381.5 124h2v2h-2zM393.5 124h2v2h-2zM395.5 124h2v2h-2z"/><path fill="#fff000" d="M391.5 0h2v2h-2zM401.5 0h2v2h-2zM379.5 2h2v2h-2zM383.5 2h2v2h-2zM387.5 2h2v2h-2zM395.5 2h2v2h-2zM399.5 2h2v2h-2zM391.5 4h2v2h-2zM395.5 4h2v2h-2zM385.5 6h2v2h-2zM387.5 6h2v2h-2zM395.5 6h2v2h-2zM397.5 6h2v2h-2zM381.5 8h2v2h-2zM385.5 8h2v2h-2zM389.5 8h2v2h-2zM391.5 10h2v2h-2zM379.5 12h2v2h-2zM381.5 12h2v2h-2zM395.5 12h2v2h-2zM397.5 12h2v2h-2zM383.5 14h2v2h-2zM397.5 16h2v2h-2zM393.5 18h2v2h-2zM377.5 20h2v2h-2zM391.5 20h2v2h-2zM399.5 20h2v2h-2zM393.5 22h2v2h-2zM389.5 24h2v2h-2zM399.5 24h2v2h-2zM377.5 26h2v2h-2zM385.5 26h2v2h-2zM391.5 26h2v2h-2zM393.5 26h2v2h-2zM369.5 28h2v2h-2zM389.5 28h2v2h-2zM391.5 28h2v2h-2zM397.5 28h2v2h-2zM403.5 28h2v2h-2zM369.5 30h2v2h-2zM375.5 30h2v2h-2zM381.5 30h2v2h-2zM391.5 30h2v2h-2zM393.5 30h2v2h-2zM399.5 30h2v2h-2zM403.5 30h2v2h-2zM383.5 32h2v2h-2zM385.5 34h2v2h-2zM385.5 38h2v2h-2zM393.5 38h2v2h-2zM381.5 40h2v2h-2zM391.5 40h2v2h-2zM385.5 42h2v2h-2zM387.5 42h2v2h-2zM391.5 42h2v2h-2zM381.5 44h2v2h-2zM385.5 44h2v2h-2zM387.5 44h2v2h-2zM387.5 46h2v2h-2zM395.5 46h2v2h-2zM383.5 48h2v2h-2zM383.5 50h2v2h-2zM385.5 50h2v2h-2zM393.5 52h2v2h-2zM381.5 54h2v2h-2zM389.5 54h2v2h-2zM391.5 54h2v2h-2zM393.5 56h2v2h-2zM391.5 58h2v2h-2zM395.5 58h2v2h-2zM389.5 62h2v2h-2zM385.5 76h2v2h-2zM389.5 80h2v2h-2zM383.5 82h2v2h-2zM391.5 82h2v2h-2zM383.5 84h2v2h-2zM385.5 84h2v2h-2zM389.5 84h2v2h-2zM391.5 84h2v2h-2zM385.5 86h2v2h-2zM389.5 86h2v2h-2zM391.5 86h2v2h-2zM393.5 88h2v2h-2zM387.5 90h2v2h-2zM379.5 92h2v2h-2zM383.5 92h2v2h-2zM391.5 92h2v2h-2zM395.5 92h2v2h-2zM381.5 94h2v2h-2zM387.5 94h2v2h-2zM395.5 96h2v2h-2zM397.5 96h2v2h-2zM379.5 98h2v2h-2zM395.5 98h2v2h-2zM397.5 100h2v2h-2zM379.5 102h2v2h-2zM385.5 102h2v2h-2zM399.5 102h2v2h-2zM381.5 104h2v2h-2zM385.5 104h2v2h-2zM395.5 104h2v2h-2zM403.5 104h2v2h-2zM377.5 106h2v2h-2zM379.5 106h2v2h-2zM385.5 106h2v2h-2zM393.5 106h2v2h-2zM397.5 106h2v2h-2zM403.5 106h2v2h-2zM383.5 108h2v2h-2zM385.5 108h2v2h-2zM389.5 108h2v2h-2zM403.5 108h2v2h-2zM399.5 110h2v2h-2zM401.5 110h2v2h-2zM405.5 110h2v2h-2zM387.5 112h2v2h-2zM391.5 112h2v2h-2zM389.5 114h2v2h-2zM383.5 116h2v2h-2zM387.5 116h2v2h-2zM391.5 116h2v2h-2zM393.5 116h2v2h-2zM387.5 118h2v2h-2zM389.5 118h2v2h-2zM393.5 118h2v2h-2zM387.5 120h2v2h-2zM395.5 120h2v2h-2zM387.5 124h2v2h-2zM397.5 124h2v2h-2zM377.5 126h2v2h-2zM391.5 126h2v2h-2zM393.5 126h2v2h-2zM395.5 126h2v2h-2zM397.5 126h2v2h-2z"/><path fill="#ffe800" d="M383.5 0h2v2h-2zM387.5 0h2v2h-2zM389.5 0h2v2h-2zM397.5 0h2v2h-2zM399.5 0h2v2h-2zM393.5 2h2v2h-2zM379.5 10h2v2h-2zM387.5 12h2v2h-2zM385.5 14h2v2h-2zM393.5 14h2v2h-2zM385.5 16h2v2h-2zM389.5 16h2v2h-2zM381.5 18h2v2h-2zM385.5 18h2v2h-2zM387.5 20h2v2h-2zM393.5 20h2v2h-2zM389.5 22h2v2h-2zM401.5 22h2v2h-2zM387.5 26h2v2h-2zM389.5 26h2v2h-2zM399.5 26h2v2h-2zM377.5 28h2v2h-2zM383.5 30h2v2h-2zM387.5 30h2v2h-2zM409.5 30h2v2h-2zM389.5 34h2v2h-2zM387.5 36h2v2h-2zM387.5 40h2v2h-2zM393.5 40h2v2h-2zM381.5 42h2v2h-2zM383.5 42h2v2h-2zM389.5 42h2v2h-2zM389.5 44h2v2h-2zM381.5 46h2v2h-2zM391.5 46h2v2h-2zM381.5 48h2v2h-2zM387.5 48h2v2h-2zM391.5 48h2v2h-2zM385.5 58h2v2h-2zM393.5 58h2v2h-2zM387.5 60h2v2h-2zM389.5 60h2v2h-2zM387.5 62h2v2h-2zM385.5 78h2v2h-2zM391.5 78h2v2h-2zM391.5 80h2v2h-2zM387.5 82h2v2h-2zM383.5 88h2v2h-2zM385.5 88h2v2h-2zM389.5 90h2v2h-2zM389.5 92h2v2h-2zM391.5 94h2v2h-2zM385.5 96h2v2h-2zM387.5 96h2v2h-2zM387.5 98h2v2h-2zM379.5 100h2v2h-2zM385.5 100h2v2h-2zM393.5 100h2v2h-2zM399.5 100h2v2h-2zM381.5 102h2v2h-2zM389.5 102h2v2h-2zM393.5 102h2v2h-2zM395.5 102h2v2h-2zM375.5 104h2v2h-2zM381.5 106h2v2h-2zM383.5 106h2v2h-2zM391.5 106h2v2h-2zM391.5 108h2v2h-2zM393.5 108h2v2h-2zM397.5 108h2v2h-2zM401.5 108h2v2h-2zM375.5 110h2v2h-2zM377.5 110h2v2h-2zM383.5 110h2v2h-2zM385.5 112h2v2h-2zM391.5 114h2v2h-2zM385.5 118h2v2h-2zM389.5 120h2v2h-2zM381.5 122h2v2h-2zM385.5 122h2v2h-2zM383.5 124h2v2h-2zM381.5 126h2v2h-2zM387.5 126h2v2h-2z"/><path fill="#ffe000" d="M387.5 10h2v2h-2zM387.5 14h2v2h-2zM387.5 18h2v2h-2zM387.5 24h2v2h-2zM387.5 28h2v2h-2zM387.5 34h2v2h-2zM389.5 36h2v2h-2zM387.5 38h2v2h-2zM387.5 50h2v2h-2zM387.5 54h2v2h-2zM389.5 56h2v2h-2zM389.5 58h2v2h-2zM385.5 74h2v2h-2zM391.5 74h2v2h-2zM387.5 76h2v2h-2zM391.5 76h2v2h-2zM389.5 78h2v2h-2zM385.5 80h2v2h-2zM389.5 82h2v2h-2zM387.5 84h2v2h-2zM387.5 86h2v2h-2zM389.5 88h2v2h-2zM389.5 94h2v2h-2zM389.5 98h2v2h-2zM387.5 102h2v2h-2zM387.5 106h2v2h-2zM389.5 106h2v2h-2zM389.5 110h2v2h-2zM389.5 112h2v2h-2zM389.5 116h2v2h-2zM389.5 124h2v2h-2zM389.5 126h2v2h-2z"/><path fill="#ffd900" d="M387.5 4h2v2h-2zM389.5 6h2v2h-2zM387.5 8h2v2h-2zM389.5 12h2v2h-2zM389.5 14h2v2h-2zM387.5 16h2v2h-2zM387.5 22h2v2h-2zM389.5 46h2v2h-2zM387.5 52h2v2h-2zM387.5 66h2v2h-2zM389.5 66h2v2h-2zM387.5 68h2v2h-2zM387.5 72h2v2h-2zM389.5 74h2v2h-2zM389.5 76h2v2h-2zM387.5 100h2v2h-2zM389.5 100h2v2h-2zM389.5 104h2v2h-2zM387.5 108h2v2h-2z"/><path fill="#ffd100" d="M387.5 64h2v2h-2zM389.5 68h2v2h-2zM387.5 70h2v2h-2zM389.5 72h2v2h-2zM387.5 78h2v2h-2zM387.5 80h2v2h-2z"/><path fill="#ffc900" d="M389.5 64h2v2h-2zM389.5 70h2v2h-2zM387.5 74h2v2h-2z"/><rect x="429" y="0" width="1" height="127" fill="#3670f4" opacity=".85"/><rect x="431" y="0" width="1" height="127" fill="#2853d9" opacity=".7"/></svg>
<span class="t" style="left:778.28px;top:105px;font-size:17.7px;color:#121212;letter-spacing:0.078px;">FFT Settings</span>
<svg style="left:1132px;top:109px" width="26" height="12" viewBox="0 0 26 12"><g fill="none" stroke="#6b6965" stroke-width="1"><rect x=".5" y=".5" width="10" height="10" rx="2.500"/><rect x="14.500" y=".5" width="10" height="10" rx="2.500"/></g><g fill="#efebe7" stroke="#5f5d59" stroke-width="1.100"><rect x="4.300" y="2.300" width="4.200" height="4.200" rx="1"/><rect x="2.400" y="4.300" width="4.200" height="4.200" rx="1" fill="#fbfaf9"/></g><path d="M16.400 2.400l6.200 6.200M22.600 2.400l-6.200 6.200" stroke="#5f5d59" stroke-width="2"/></svg>
<span class="t" style="left:800.68px;top:136px;font-size:17.7px;color:#121212;letter-spacing:-0.496px;">FFT size</span>
<div class="cmb" style="left:872px;top:131px;width:103px;height:29px;"></div>
<span class="t" style="left:877.38px;top:136px;font-size:17.7px;color:#121212;letter-spacing:0.430px;">32768</span>
<svg style="left:959.6px;top:143.3px" width="9" height="6" viewBox="0 0 9 6"><path d="M.6 .8h7.400L4.300 5.200z" fill="#4f4d4a"/></svg>
<span class="t" style="left:980.08px;top:136px;font-size:17.7px;color:#121212;letter-spacing:-0.251px;">RBW: 54.9 Hz</span>
<span class="t" style="left:827.38px;top:171px;font-size:17.7px;color:#121212;letter-spacing:0.259px;">Rate</span>
<div class="cmb" style="left:872px;top:166px;width:103px;height:29px;"></div>
<span class="t" style="left:877.12px;top:171px;font-size:17.7px;color:#121212;letter-spacing:0.434px;">25 fps</span>
<svg style="left:959.6px;top:178.3px" width="9" height="6" viewBox="0 0 9 6"><path d="M.6 .8h7.400L4.300 5.200z" fill="#4f4d4a"/></svg>
<span class="t" style="left:980.70px;top:171px;font-size:17.7px;color:#121212;letter-spacing:0.178px;">Overlap: 0%</span>
<span class="t" style="left:783.75px;top:206px;font-size:17.7px;color:#121212;letter-spacing:0.021px;">Time span</span>
<div class="cmb" style="left:872px;top:201px;width:103px;height:29px;"></div>
<span class="t" style="left:878.00px;top:206px;font-size:17.7px;color:#121212;letter-spacing:0.945px;">Auto</span>
<svg style="left:959.6px;top:213.3px" width="9" height="6" viewBox="0 0 9 6"><path d="M.6 .8h7.400L4.300 5.200z" fill="#4f4d4a"/></svg>
<span class="t" style="left:980.08px;top:206px;font-size:17.7px;color:#121212;letter-spacing:-0.318px;">Res:</span>
<span class="t" style="left:1017.89px;top:206px;font-size:17.7px;color:#121212;">-</span>
<span class="t" style="left:1028.06px;top:206px;font-size:17.7px;color:#121212;">s</span>
<span class="t" style="left:784.30px;top:238px;font-size:17.7px;color:#121212;letter-spacing:0.260px;">Averaging</span>
<div class="grv" style="left:873px;top:244px;width:191px;height:6px;"></div>
<div class="fil" style="left:873px;top:244px;width:167px;height:6px;"></div>
<div class="thm" style="left:1032px;top:238px;width:16px;height:16px;"></div>
<span class="t" style="left:780.78px;top:266px;font-size:17.7px;color:#121212;letter-spacing:0.312px;">Pandapter</span>
<div class="grv" style="left:873px;top:272px;width:191px;height:6px;"></div>
<div class="fil" style="left:873px;top:272px;width:127px;height:6px;"></div>
<div class="thm" style="left:992px;top:266px;width:16px;height:16px;"></div>
<span class="t" style="left:1072.00px;top:266px;font-size:17.7px;color:#121212;letter-spacing:0.780px;">Waterfall</span>
<span class="t" style="left:825.98px;top:295px;font-size:17.7px;color:#121212;letter-spacing:-0.510px;">Peak</span>
<div class="btn" style="left:872px;top:293px;width:140px;height:24px;"></div>
<span class="t" style="left:913.43px;top:296px;font-size:17.7px;color:#121212;letter-spacing:0.930px;">Detect</span>
<div class="btn" style="left:1014px;top:293px;width:140px;height:24px;"></div>
<span class="t" style="left:1064.08px;top:296px;font-size:17.7px;color:#121212;letter-spacing:1.035px;">Hold</span>
<span class="t" style="left:794.08px;top:326px;font-size:17.7px;color:#121212;letter-spacing:-0.178px;">Pand. dB</span>
<div class="grv" style="left:873px;top:332px;width:191px;height:6px;"></div>
<div class="fil" style="left:926px;top:332px;width:130px;height:6px;"></div>
<div class="thm" style="left:918px;top:326px;width:16px;height:16px;"></div>
<div class="thm" style="left:1048px;top:326px;width:16px;height:16px;"></div>
<div class="btn" style="left:1071px;top:323px;width:83px;height:24px;"></div>
<span class="t" style="left:1093.13px;top:326px;font-size:17.7px;color:#121212;letter-spacing:-0.040px;">Lock</span>
<span class="t" style="left:813.40px;top:354px;font-size:17.7px;color:#121212;letter-spacing:-0.183px;">Wf. dB</span>
<div class="grv" style="left:873px;top:360px;width:191px;height:6px;"></div>
<div class="fil" style="left:952px;top:360px;width:104px;height:6px;"></div>
<div class="thm" style="left:944px;top:354px;width:16px;height:16px;"></div>
<div class="thm" style="left:1048px;top:354px;width:16px;height:16px;"></div>
<span class="t" style="left:780.18px;top:382px;font-size:17.7px;color:#121212;letter-spacing:0.133px;">Freq zoom</span>
<div class="grv" style="left:873px;top:388px;width:191px;height:6px;"></div>
<div class="fil" style="left:873px;top:388px;width:12px;height:6px;"></div>
<div class="thm" style="left:877px;top:382px;width:16px;height:16px;"></div>
<span class="t" style="left:1070.71px;top:382px;font-size:17.7px;color:#121212;letter-spacing:0.389px;">2x</span>
<div class="btn" style="left:780px;top:408px;width:123px;height:24px;"></div>
<span class="t" style="left:817.18px;top:411px;font-size:17.7px;color:#121212;letter-spacing:0.255px;">Reset</span>
<div class="btn" style="left:905px;top:408px;width:124px;height:24px;"></div>
<span class="t" style="left:939.12px;top:411px;font-size:17.7px;color:#121212;letter-spacing:0.392px;">Center</span>
<div class="btn" style="left:1031px;top:408px;width:123px;height:24px;"></div>
<span class="t" style="left:1061.93px;top:411px;font-size:17.7px;color:#121212;letter-spacing:0.924px;">Demod</span>
<span class="t" style="left:821.82px;top:441px;font-size:17.7px;color:#121212;letter-spacing:0.412px;">Color</span>
<div style="left:890px;top:442px;width:16px;height:16px;border:1px solid #a3a09c;background:#fff;border-radius:1px;"></div>
<span class="t" style="left:909.50px;top:441px;font-size:17.7px;color:#121212;letter-spacing:0.621px;">White</span>
<div class="btn" style="left:981px;top:438px;width:84px;height:24px;"></div>
<span class="t" style="left:1009.83px;top:441px;font-size:17.7px;color:#121212;letter-spacing:1.137px;">Fill</span>
<div style="left:775px;top:530px;width:125px;height:32px;border:1px solid #bab6b1;border-top-color:#c9c5c0;border-radius:0 0 4px 4px;background:linear-gradient(#dcd8d4,#e1ddd9);"></div>
<div style="left:899px;top:530px;width:150px;height:32px;border:1px solid #bab6b1;border-top-color:#c9c5c0;border-radius:0 0 4px 4px;background:linear-gradient(#dcd8d4,#e1ddd9);"></div>
<div style="left:1048px;top:530px;width:110px;height:34px;border:1px solid #b5b1ac;border-top:none;border-radius:0 0 4px 4px;background:linear-gradient(#efebe7,#f7f5f3);"></div>
<span class="t" style="left:793.61px;top:537px;font-size:17.7px;color:#121212;letter-spacing:0.784px;">Input co…</span>
<span class="t" style="left:913.88px;top:537px;font-size:17.7px;color:#121212;letter-spacing:0.272px;">Receiver Op…</span>
<span class="t" style="left:1062.78px;top:538px;font-size:17.7px;color:#121212;letter-spacing:0.068px;">FFT Set…</span>
<span class="t" style="left:779.40px;top:574px;font-size:17.7px;color:#121212;letter-spacing:0.496px;">Audio</span>
<svg style="left:1132px;top:578px" width="26" height="12" viewBox="0 0 26 12"><g fill="none" stroke="#6b6965" stroke-width="1"><rect x=".5" y=".5" width="10" height="10" rx="2.500"/><rect x="14.500" y=".5" width="10" height="10" rx="2.500"/></g><g fill="#efebe7" stroke="#5f5d59" stroke-width="1.100"><rect x="4.300" y="2.300" width="4.200" height="4.200" rx="1"/><rect x="2.400" y="4.300" width="4.200" height="4.200" rx="1" fill="#fbfaf9"/></g><path d="M16.400 2.400l6.200 6.200M22.600 2.400l-6.200 6.200" stroke="#5f5d59" stroke-width="2"/></svg>
<div style="left:786px;top:606px;width:362px;height:100px;background:#1f1d1e;"></div>
<svg style="left:786px;top:606px" width="362" height="100" viewBox="0 0 362 100"><g stroke="#4f4d4f" stroke-width="1" stroke-dasharray="1 2" shape-rendering="crispEdges"><path d="M56 .5H362"/><path d="M56 25.5H362"/><path d="M56 50.5H362"/><path d="M75.5 0V71"/><path d="M150.5 0V71"/><path d="M226.5 0V71"/><path d="M301.5 0V71"/></g><polyline fill="none" stroke="#fff" stroke-width="1" shape-rendering="crispEdges" points="0.5,100 1.500,92 2.500,74 3.500,65 4.500,96 5.500,82 6.500,72 7.500,99 8.500,80 9.500,97 10.500,88 11.500,99 12.500,95 13.500,100"/></svg>
<span class="t" style="left:804.98px;top:622px;font-size:17.9px;color:#dcdcdc;letter-spacing:0.139px;">-20</span>
<span class="t" style="left:804.98px;top:647px;font-size:17.9px;color:#dcdcdc;letter-spacing:0.139px;">-40</span>
<span class="t" style="left:855.83px;top:681px;font-size:17.9px;color:#dcdcdc;">5</span>
<span class="t" style="left:925.81px;top:681px;font-size:17.9px;color:#dcdcdc;letter-spacing:0.600px;">10</span>
<span class="t" style="left:1001.41px;top:681px;font-size:17.9px;color:#dcdcdc;letter-spacing:0.690px;">15</span>
<span class="t" style="left:1076.61px;top:681px;font-size:17.9px;color:#dcdcdc;letter-spacing:0.653px;">20</span>
<span class="t" style="left:785.91px;top:715px;font-size:17.7px;color:#121212;letter-spacing:-0.081px;">Gain:</span>
<div class="grv" style="left:834px;top:722px;width:240px;height:6px;"></div>
<div class="fil" style="left:834px;top:722px;width:92px;height:6px;"></div>
<div class="thm" style="left:918px;top:716px;width:16px;height:16px;"></div>
<span class="t" style="left:1080.29px;top:715px;font-size:17.7px;color:#121212;letter-spacing:0.098px;">-31.2 dB</span>
<div class="btn" style="left:786px;top:742px;width:90px;height:24px;"></div>
<span class="t" style="left:812.17px;top:745px;font-size:17.7px;color:#121212;letter-spacing:-0.067px;">UDP</span>
<div class="btn" style="left:877px;top:742px;width:89px;height:24px;"></div>
<span class="t" style="left:905.58px;top:745px;font-size:17.7px;color:#121212;letter-spacing:-0.324px;">Rec</span>
<div class="btn" style="left:967px;top:742px;width:90px;height:24px;"></div>
<span class="t" style="left:994.08px;top:745px;font-size:17.7px;color:#b4b0ab;letter-spacing:-0.004px;">Play</span>
<div class="btn" style="left:1058px;top:742px;width:90px;height:24px;"></div>
<span class="t" style="left:1095.66px;top:745px;font-size:17.7px;color:#121212;letter-spacing:-0.047px;">...</span>
<span class="t" style="left:951.17px;top:774px;font-size:17.7px;color:#121212;letter-spacing:-1.921px;font-style:italic;">DSP</span>
<span class="t" style="left:3.98px;top:570px;font-size:17.7px;color:#121212;letter-spacing:0.504px;">Bookmarks</span>
<svg style="left:741px;top:574px" width="26" height="12" viewBox="0 0 26 12"><g fill="none" stroke="#6b6965" stroke-width="1"><rect x=".5" y=".5" width="10" height="10" rx="2.500"/><rect x="14.500" y=".5" width="10" height="10" rx="2.500"/></g><g fill="#efebe7" stroke="#5f5d59" stroke-width="1.100"><rect x="4.300" y="2.300" width="4.200" height="4.200" rx="1"/><rect x="2.400" y="4.300" width="4.200" height="4.200" rx="1" fill="#fbfaf9"/></g><path d="M16.400 2.400l6.200 6.200M22.600 2.400l-6.200 6.200" stroke="#5f5d59" stroke-width="2"/></svg>
<div style="left:12px;top:602px;width:484px;height:192px;border:1px solid #b8b4af;background:#efebe7;"></div>
<div style="left:13px;top:603px;width:465px;height:24px;background:linear-gradient(#faf9f7,#ebe8e4);"></div>
<div style="left:13px;top:627px;width:465px;height:1px;background:#b8b4af;"></div>
<div style="left:152px;top:603px;width:1px;height:24px;background:#c6c2bd;"></div>
<div style="left:402px;top:603px;width:1px;height:24px;background:#c6c2bd;"></div>
<span class="t" style="left:45.30px;top:606px;font-size:17.7px;color:#121212;letter-spacing:-0.028px;font-weight:bold;">Frequency</span>
<span class="t" style="left:251.85px;top:606px;font-size:17.7px;color:#121212;letter-spacing:0.816px;font-weight:bold;">Name</span>
<div style="left:403px;top:603px;width:75px;height:24px;overflow:hidden;"><span class="t" style="left:13.500px;top:3px;font-size:17.700px;font-weight:bold;color:#121212;letter-spacing:.35px">Modulation</span></div>
<div style="left:13px;top:628px;width:14px;height:36px;background:linear-gradient(#f9f8f6,#eeebe8);"></div>
<div style="left:13px;top:664px;width:15px;height:1px;background:#b8b4af;"></div>
<div style="left:27px;top:628px;width:1px;height:36px;background:#b8b4af;"></div>
<div style="left:28px;top:628px;width:450px;height:36px;background:#e9e9e9;"></div>
<div style="left:28px;top:664px;width:450px;height:1px;background:#c4c4c4;"></div>
<div style="left:152px;top:628px;width:1px;height:36px;background:#c4c4c4;"></div>
<div style="left:402px;top:628px;width:1px;height:36px;background:#c4c4c4;"></div>
<span class="t" style="left:14.84px;top:637px;font-size:17.7px;color:#121212;">2</span>
<span class="t" style="left:31.29px;top:637px;font-size:17.7px;color:#1c1c1c;letter-spacing:0.296px;">5000000</span>
<span class="t" style="left:156.20px;top:637px;font-size:17.7px;color:#1c1c1c;letter-spacing:0.021px;">WWV 5.0</span>
<span class="t" style="left:406.50px;top:637px;font-size:17.7px;color:#1c1c1c;letter-spacing:1.066px;">AM</span>
<div style="left:13px;top:665px;width:14px;height:36px;background:linear-gradient(#f9f8f6,#eeebe8);"></div>
<div style="left:13px;top:701px;width:15px;height:1px;background:#b8b4af;"></div>
<div style="left:27px;top:665px;width:1px;height:36px;background:#b8b4af;"></div>
<div style="left:28px;top:665px;width:450px;height:36px;background:#e1e1e1;"></div>
<div style="left:28px;top:701px;width:450px;height:1px;background:#c4c4c4;"></div>
<div style="left:152px;top:665px;width:1px;height:36px;background:#c4c4c4;"></div>
<div style="left:402px;top:665px;width:1px;height:36px;background:#c4c4c4;"></div>
<span class="t" style="left:14.93px;top:674px;font-size:17.7px;color:#121212;">3</span>
<span class="t" style="left:30.67px;top:674px;font-size:17.7px;color:#1c1c1c;letter-spacing:0.312px;">10000000</span>
<span class="t" style="left:156.20px;top:674px;font-size:17.7px;color:#1c1c1c;letter-spacing:0.002px;">WWV 10.0</span>
<span class="t" style="left:406.50px;top:674px;font-size:17.7px;color:#1c1c1c;letter-spacing:1.066px;">AM</span>
<div style="left:13px;top:702px;width:14px;height:36px;background:linear-gradient(#f9f8f6,#eeebe8);"></div>
<div style="left:13px;top:738px;width:15px;height:1px;background:#b8b4af;"></div>
<div style="left:27px;top:702px;width:1px;height:36px;background:#b8b4af;"></div>
<div style="left:28px;top:702px;width:450px;height:36px;background:#e9e9e9;"></div>
<div style="left:28px;top:738px;width:450px;height:1px;background:#c4c4c4;"></div>
<div style="left:152px;top:702px;width:1px;height:36px;background:#c4c4c4;"></div>
<div style="left:402px;top:702px;width:1px;height:36px;background:#c4c4c4;"></div>
<span class="t" style="left:14.93px;top:711px;font-size:17.7px;color:#121212;">4</span>
<span class="t" style="left:30.67px;top:711px;font-size:17.7px;color:#1c1c1c;letter-spacing:0.312px;">15000000</span>
<span class="t" style="left:156.20px;top:711px;font-size:17.7px;color:#1c1c1c;letter-spacing:0.002px;">WWV 15.0</span>
<span class="t" style="left:406.50px;top:711px;font-size:17.7px;color:#1c1c1c;letter-spacing:1.066px;">AM</span>
<div style="left:13px;top:739px;width:14px;height:36px;background:linear-gradient(#f9f8f6,#eeebe8);"></div>
<div style="left:13px;top:775px;width:15px;height:1px;background:#b8b4af;"></div>
<div style="left:27px;top:739px;width:1px;height:36px;background:#b8b4af;"></div>
<div style="left:28px;top:739px;width:450px;height:36px;background:#308cc6;"></div>
<div style="left:28px;top:775px;width:450px;height:1px;background:#c4c4c4;"></div>
<div style="left:152px;top:739px;width:1px;height:36px;background:#c4c4c4;"></div>
<div style="left:402px;top:739px;width:1px;height:36px;background:#c4c4c4;"></div>
<span class="t" style="left:14.84px;top:748px;font-size:17.7px;color:#121212;font-weight:bold;">5</span>
<span class="t" style="left:31.20px;top:748px;font-size:17.7px;color:#ffffff;letter-spacing:0.279px;">98100000</span>
<span class="t" style="left:156.02px;top:748px;font-size:17.7px;color:#ffffff;letter-spacing:0.074px;">fm classical</span>
<div style="left:403px;top:739px;width:75px;height:36px;overflow:hidden;"><span class="t" style="left:3.500px;top:9px;font-size:17.700px;color:#fff;letter-spacing:-.1px">WFM (mono)</span></div>
<div style="left:478px;top:603px;width:1px;height:173px;background:#b8b4af;"></div>
<div style="left:479px;top:603px;width:16px;height:173px;background:#dcd9d5;"></div>
<div style="left:479px;top:603px;width:16px;height:16px;background:linear-gradient(90deg,#f8f7f5,#e8e5e1);"></div>
<div style="left:479px;top:619px;width:16px;height:1px;background:#b8b4af;"></div>
<div style="left:479px;top:760px;width:16px;height:16px;background:linear-gradient(90deg,#f8f7f5,#e8e5e1);"></div>
<div style="left:479px;top:759px;width:16px;height:1px;background:#b8b4af;"></div>
<div style="left:479px;top:647px;width:16px;height:56px;background:linear-gradient(90deg,#fcfbfa,#efece9);border-top:1px solid #b8b4af;border-bottom:1px solid #b8b4af;"></div>
<svg style="left:482px;top:607.5px" width="10" height="8" viewBox="0 0 10 8"><path d="M1 6.500L5 1.800 9 6.500z" fill="#4f4d4a"/></svg>
<svg style="left:482px;top:764px" width="10" height="8" viewBox="0 0 10 8"><path d="M1 1.500L5 6.200 9 1.500z" fill="#4f4d4a"/></svg>
<div style="left:13px;top:776px;width:482px;height:1px;background:#b8b4af;"></div>
<div style="left:13px;top:777px;width:465px;height:16px;background:#dcd9d5;"></div>
<div style="left:13px;top:777px;width:16px;height:16px;background:linear-gradient(#f8f7f5,#e8e5e1);"></div>
<div style="left:29px;top:777px;width:1px;height:16px;background:#b8b4af;"></div>
<div style="left:462px;top:777px;width:16px;height:16px;background:linear-gradient(#f8f7f5,#e8e5e1);"></div>
<div style="left:461px;top:777px;width:1px;height:16px;background:#b8b4af;"></div>
<div style="left:30px;top:777px;width:258px;height:16px;background:linear-gradient(#fcfbfa,#efece9);border-right:1px solid #b8b4af;"></div>
<svg style="left:17px;top:780px" width="8" height="10" viewBox="0 0 8 10"><path d="M6.500 1L1.800 5 6.500 9z" fill="#4f4d4a"/></svg>
<svg style="left:466px;top:780px" width="8" height="10" viewBox="0 0 8 10"><path d="M1.500 1L6.200 5 1.500 9z" fill="#4f4d4a"/></svg>
<div style="left:478px;top:777px;width:1px;height:16px;background:#b8b4af;"></div>
<div style="left:479px;top:777px;width:16px;height:16px;background:#efebe7;"></div>
<div style="left:501px;top:602px;width:256px;height:192px;border:2px solid #b7b3ae;background:#fff;"></div>
<div style="left:503px;top:604px;width:19px;height:35px;background:#c0c0c0;"></div>
<div style="left:503px;top:639px;width:252px;height:1px;background:#c9c9c9;"></div>
<div style="left:525px;top:613px;width:17px;height:17px;border:1px solid #b3afaa;background:#fff;"></div>
<svg style="left:527px;top:615px" width="14" height="14" viewBox="0 0 14 14"><path d="M1.600 7.300l2-1.300 1.900 3q1.800-4.600 4.600-7.600l1.500 1Q8.600 6.600 6.800 12.300h-2z" fill="#0a0a0a"/></svg>
<span class="t" style="left:547.27px;top:612px;font-size:17.7px;color:#121212;letter-spacing:0.694px;">Untagged</span>
<svg style="left:377px;top:564px" width="18" height="2" viewBox="0 0 18 2"><g fill="#b5b1ac"><rect x="0" y="0" width="1" height="1"/><rect x="3" y="0" width="1" height="1"/><rect x="6" y="0" width="1" height="1"/><rect x="9" y="0" width="1" height="1"/><rect x="12" y="0" width="1" height="1"/><rect x="15" y="0" width="1" height="1"/></g></svg>
<svg style="left:960px;top:568px" width="18" height="2" viewBox="0 0 18 2"><g fill="#b5b1ac"><rect x="0" y="0" width="1" height="1"/><rect x="3" y="0" width="1" height="1"/><rect x="6" y="0" width="1" height="1"/><rect x="9" y="0" width="1" height="1"/><rect x="12" y="0" width="1" height="1"/><rect x="15" y="0" width="1" height="1"/></g></svg>
<svg style="left:772px;top:447px" width="2" height="18" viewBox="0 0 2 18"><g fill="#b5b1ac"><rect x="0" y="0" width="1" height="1"/><rect x="0" y="3" width="1" height="1"/><rect x="0" y="6" width="1" height="1"/><rect x="0" y="9" width="1" height="1"/><rect x="0" y="12" width="1" height="1"/><rect x="0" y="15" width="1" height="1"/></g></svg>
<svg style="left:498px;top:690px" width="2" height="18" viewBox="0 0 2 18"><g fill="#b5b1ac"><rect x="0" y="0" width="1" height="1"/><rect x="0" y="3" width="1" height="1"/><rect x="0" y="6" width="1" height="1"/><rect x="0" y="9" width="1" height="1"/><rect x="0" y="12" width="1" height="1"/><rect x="0" y="15" width="1" height="1"/></g></svg>
<span class="t" style="left:6.42px;top:809px;font-size:17.7px;color:#121212;letter-spacing:0.220px;">Click,</span>
<span class="t" style="left:53.49px;top:809px;font-size:17.7px;color:#121212;letter-spacing:0.523px;">drag</span>
<span class="t" style="left:95.09px;top:809px;font-size:17.7px;color:#121212;letter-spacing:0.220px;">or</span>
<span class="t" style="left:116.76px;top:809px;font-size:17.7px;color:#121212;letter-spacing:0.553px;">scroll</span>
<span class="t" style="left:164.89px;top:809px;font-size:17.7px;color:#121212;letter-spacing:0.523px;">on</span>
<span class="t" style="left:190.06px;top:809px;font-size:17.7px;color:#121212;letter-spacing:0.494px;">spectrum</span>
<span class="t" style="left:270.83px;top:809px;font-size:17.7px;color:#121212;letter-spacing:0.894px;">to</span>
<span class="t" style="left:291.93px;top:809px;font-size:17.7px;color:#121212;letter-spacing:1.094px;">tune.</span>
<span class="t" style="left:338.88px;top:809px;font-size:17.7px;color:#121212;letter-spacing:0.252px;">Drag</span>
<span class="t" style="left:382.59px;top:809px;font-size:17.7px;color:#121212;letter-spacing:0.550px;">and</span>
<span class="t" style="left:418.06px;top:809px;font-size:17.7px;color:#121212;letter-spacing:0.433px;">scroll</span>
<span class="t" style="left:465.95px;top:809px;font-size:17.7px;color:#121212;">X</span>
<span class="t" style="left:481.09px;top:809px;font-size:17.7px;color:#121212;letter-spacing:0.350px;">and</span>
<span class="t" style="left:514.85px;top:809px;font-size:17.7px;color:#121212;">Y</span>
<span class="t" style="left:529.49px;top:809px;font-size:17.7px;color:#121212;letter-spacing:-0.107px;">axes</span>
<span class="t" style="left:571.62px;top:809px;font-size:17.7px;color:#121212;letter-spacing:-0.183px;">for</span>
<span class="t" style="left:597.94px;top:809px;font-size:17.7px;color:#121212;letter-spacing:1.027px;">pan</span>
<span class="t" style="left:633.49px;top:809px;font-size:17.7px;color:#121212;letter-spacing:0.350px;">and</span>
<span class="t" style="left:667.49px;top:809px;font-size:17.7px;color:#121212;letter-spacing:0.742px;">zoom.</span>
<span class="t" style="left:721.58px;top:809px;font-size:17.7px;color:#121212;letter-spacing:0.253px;">Drag</span>
<span class="t" style="left:766.22px;top:809px;font-size:17.7px;color:#121212;letter-spacing:1.138px;">filter</span>
<span class="t" style="left:810.49px;top:809px;font-size:17.7px;color:#121212;letter-spacing:-0.226px;">edges</span>
<span class="t" style="left:863.43px;top:809px;font-size:17.7px;color:#121212;letter-spacing:0.794px;">to</span>
<span class="t" style="left:884.39px;top:809px;font-size:17.7px;color:#121212;letter-spacing:0.247px;">adjust</span>
<span class="t" style="left:938.52px;top:809px;font-size:17.7px;color:#121212;letter-spacing:1.239px;">filter.</span>
<div style="left:0px;top:0px;width:1px;height:835px;background:#5a5a5a;"></div>
<div style="left:1159px;top:0px;width:1px;height:835px;background:#4e4e4e;"></div>
<div style="left:0px;top:831px;width:1160px;height:1px;background:#5c5c5c;"></div>
<div style="left:0px;top:832px;width:1160px;height:1px;background:#fdfdfd;"></div>
<div style="left:0px;top:833px;width:1160px;height:1px;background:#dedede;"></div>
<div style="left:0px;top:834px;width:1160px;height:1px;background:#5f5f5f;"></div>
<div style="left:26px;top:832px;width:1px;height:2px;background:#5c5c5c;"></div>
<div style="left:1133px;top:832px;width:1px;height:2px;background:#5c5c5c;"></div>
<div style="left:0px;top:0px;width:1160px;height:1px;background:#3c3c3c;"></div>
<svg style="left:1146px;top:818px" width="13" height="13" viewBox="0 0 13 13" shape-rendering="crispEdges"><rect x="10" y="1" width="1" height="1" fill="#a9a5a0"/><rect x="11" y="2" width="1" height="1" fill="#fbfaf9"/><rect x="7" y="4" width="1" height="1" fill="#a9a5a0"/><rect x="8" y="5" width="1" height="1" fill="#fbfaf9"/><rect x="10" y="4" width="1" height="1" fill="#a9a5a0"/><rect x="11" y="5" width="1" height="1" fill="#fbfaf9"/><rect x="4" y="7" width="1" height="1" fill="#a9a5a0"/><rect x="5" y="8" width="1" height="1" fill="#fbfaf9"/><rect x="7" y="7" width="1" height="1" fill="#a9a5a0"/><rect x="8" y="8" width="1" height="1" fill="#fbfaf9"/><rect x="10" y="7" width="1" height="1" fill="#a9a5a0"/><rect x="11" y="8" width="1" height="1" fill="#fbfaf9"/><rect x="1" y="10" width="1" height="1" fill="#a9a5a0"/><rect x="2" y="11" width="1" height="1" fill="#fbfaf9"/><rect x="4" y="10" width="1" height="1" fill="#a9a5a0"/><rect x="5" y="11" width="1" height="1" fill="#fbfaf9"/><rect x="7" y="10" width="1" height="1" fill="#a9a5a0"/><rect x="8" y="11" width="1" height="1" fill="#fbfaf9"/><rect x="10" y="10" width="1" height="1" fill="#a9a5a0"/><rect x="11" y="11" width="1" height="1" fill="#fbfaf9"/></svg>
</div></body></html>
